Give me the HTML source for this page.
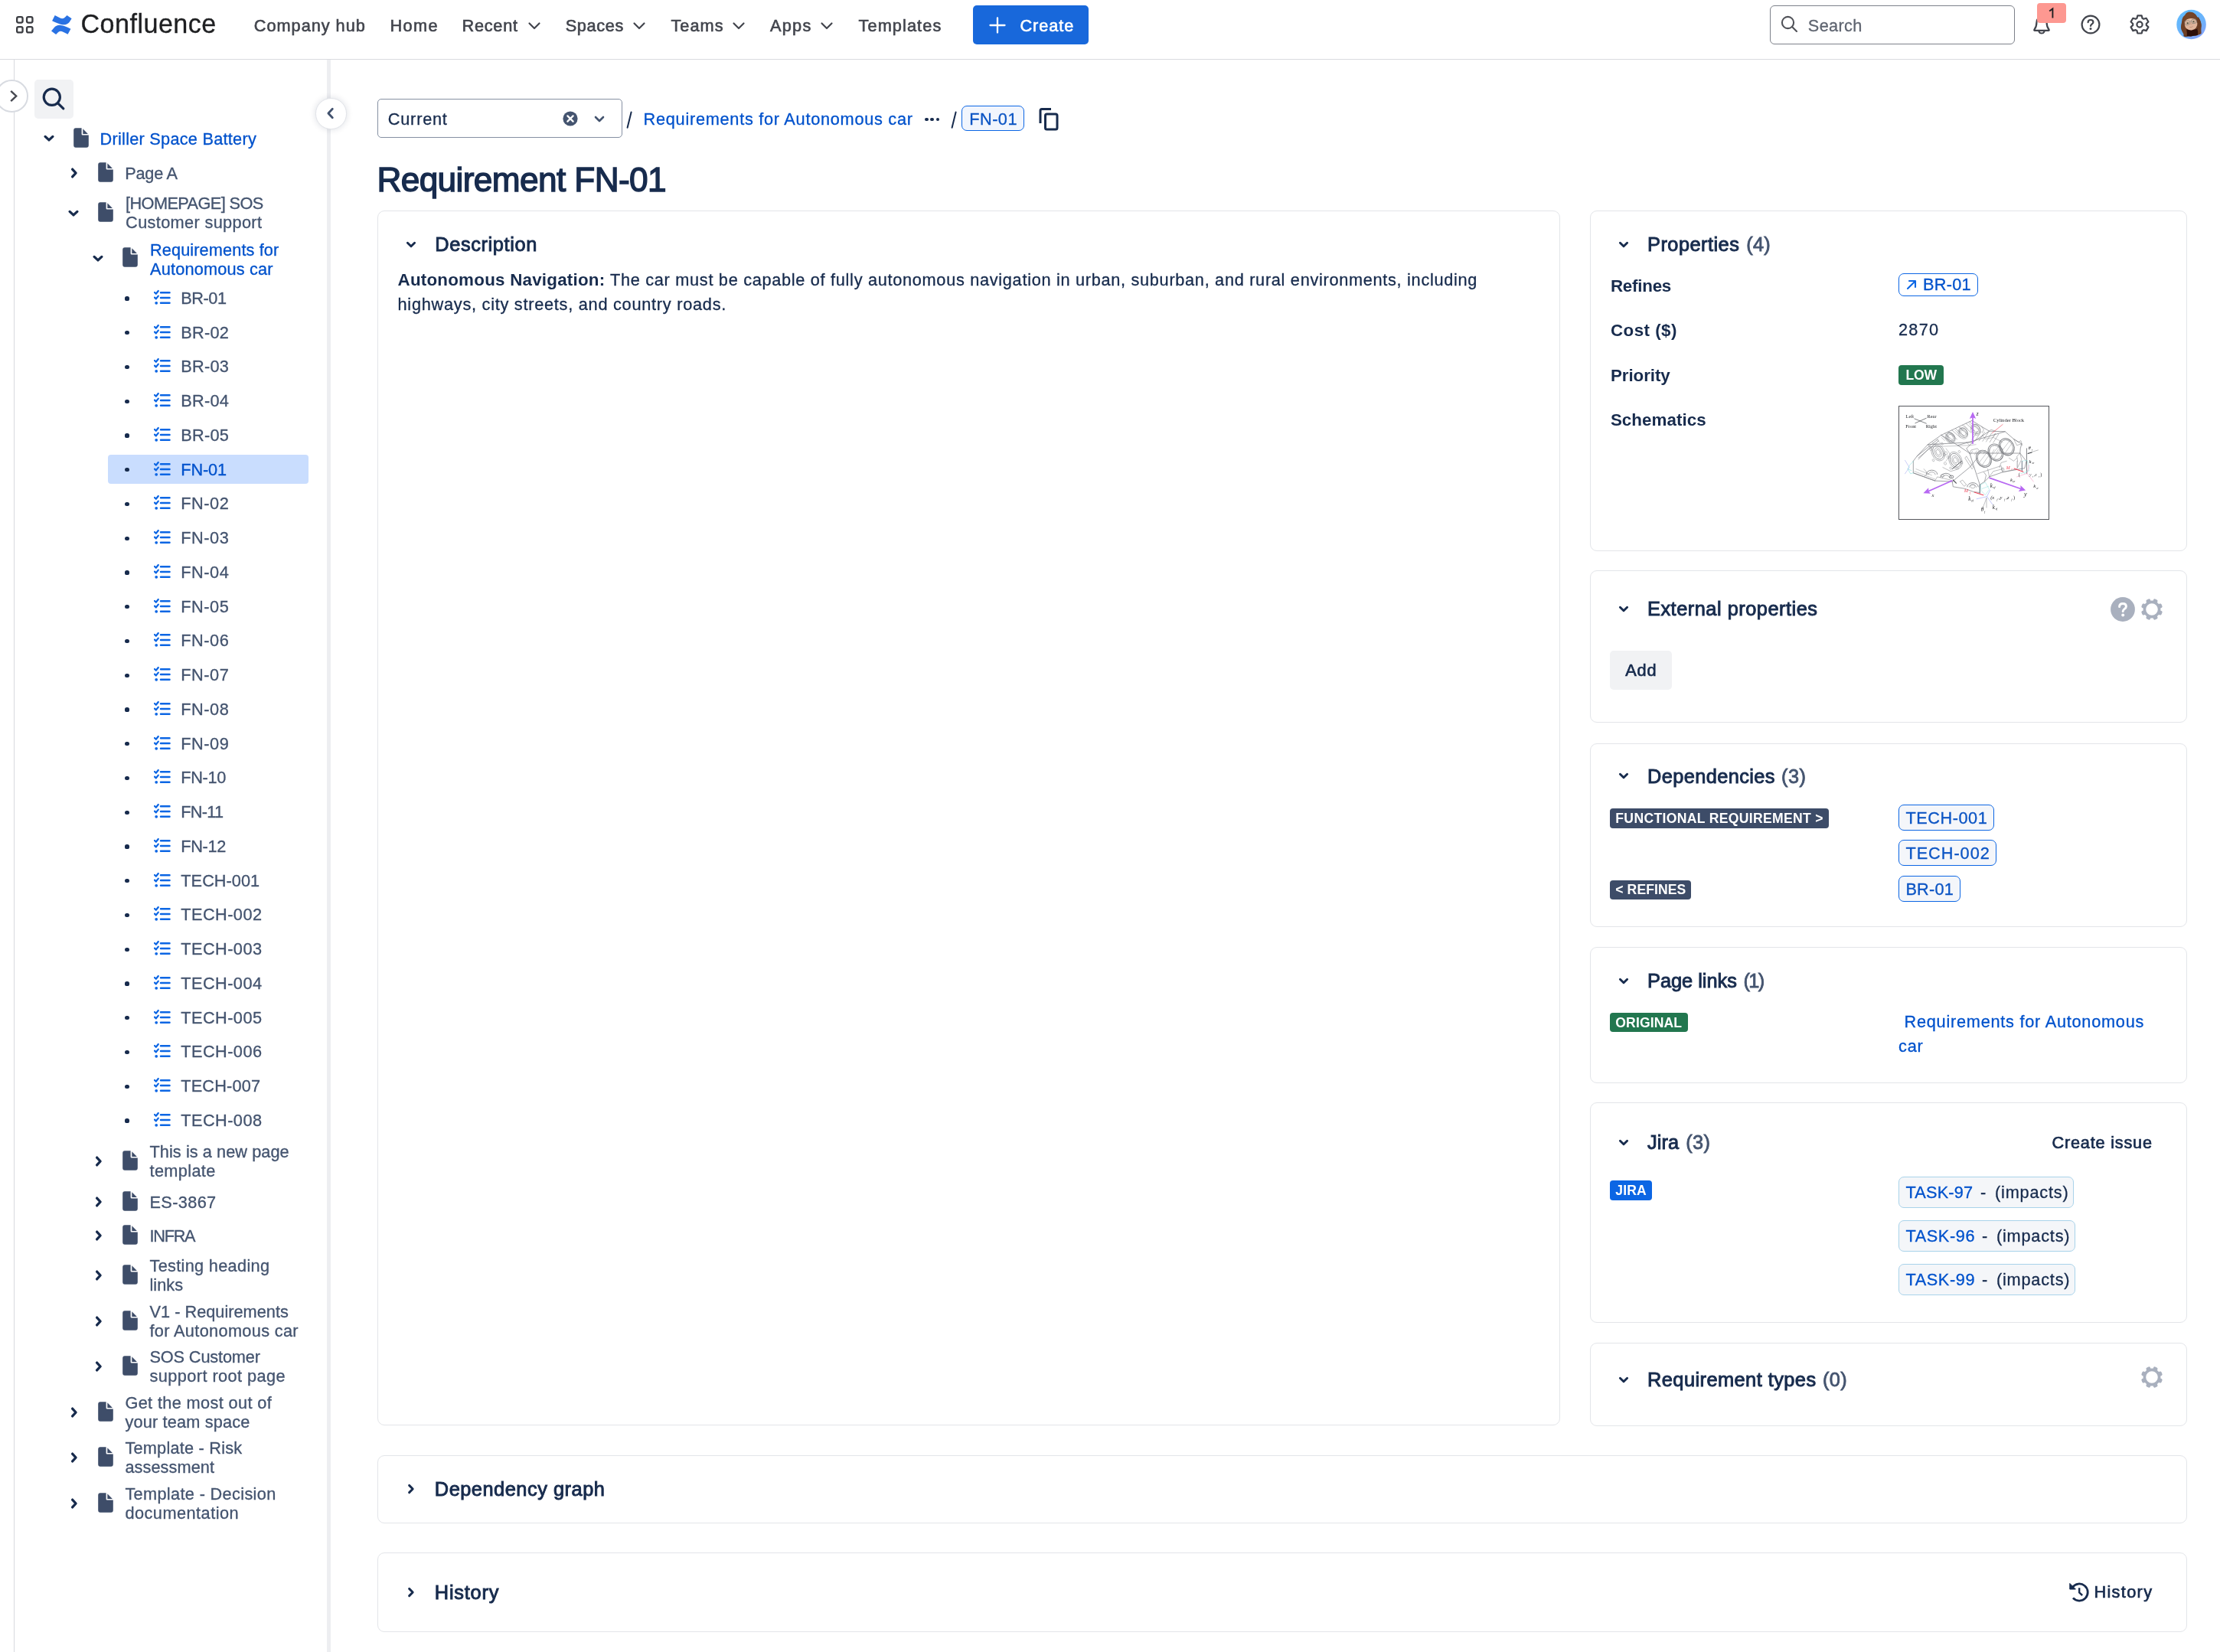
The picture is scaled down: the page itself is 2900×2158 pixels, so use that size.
<!DOCTYPE html>
<html><head><meta charset="utf-8"><title>Requirement FN-01</title><style>
html,body{margin:0;padding:0;background:#fff;}
body{width:2900px;height:2158px;position:relative;overflow:hidden;font-family:"Liberation Sans",sans-serif;}
body>div,body>svg,#tx>span{position:absolute;box-sizing:border-box;}
#tx{left:0;top:0;width:2900px;height:2158px;will-change:transform;}
span.t{white-space:pre;line-height:1;display:block;}
</style></head><body>
<div style="left:0px;top:76.6px;width:2900px;height:1.4px;background:#d9dbdf;"></div>
<svg style="left:18px;top:18px;" width="30" height="30" viewBox="18 18 30 30"><g fill="none" stroke="#3b3d42" stroke-width="2.3"><rect x="22.15" y="22.15" width="7.4" height="7.4" rx="2"/><rect x="35.05" y="22.15" width="7.4" height="7.4" rx="2"/><rect x="22.15" y="35.05" width="7.4" height="7.4" rx="2"/><rect x="35.05" y="35.05" width="7.4" height="7.4" rx="2"/></g></svg>
<svg style="left:60px;top:15px;" width="40" height="35" viewBox="60 15 40 35"><g fill="#2a72e3"><path d="M71.7 20.1 L78 23.3 Q82.5 25.4 85 22.6 L87.5 20 L93.6 24.3 L90.6 28.9 Q86.5 33.5 80 31.9 Q76 30.9 68.1 27.3 Z"/><path d="M88.6 44.7 L82.5 41.7 Q78 39.6 75.6 42.4 L73.1 44.9 L67 40.6 L70.4 36.6 Q74.4 31.6 81 33.3 Q85 34.2 92.4 37.7 Z"/></g></svg>
<svg style="left:688.6px;top:27.5px;" width="18" height="12" viewBox="0 0 18 12"><path d="M2.5 2.5 L9 9 L15.5 2.5" fill="none" stroke="#42454d" stroke-width="2.2" stroke-linecap="round" stroke-linejoin="round"/></svg>
<svg style="left:825.7px;top:27.5px;" width="18" height="12" viewBox="0 0 18 12"><path d="M2.5 2.5 L9 9 L15.5 2.5" fill="none" stroke="#42454d" stroke-width="2.2" stroke-linecap="round" stroke-linejoin="round"/></svg>
<svg style="left:956.4px;top:27.5px;" width="18" height="12" viewBox="0 0 18 12"><path d="M2.5 2.5 L9 9 L15.5 2.5" fill="none" stroke="#42454d" stroke-width="2.2" stroke-linecap="round" stroke-linejoin="round"/></svg>
<svg style="left:1071.3px;top:27.5px;" width="18" height="12" viewBox="0 0 18 12"><path d="M2.5 2.5 L9 9 L15.5 2.5" fill="none" stroke="#42454d" stroke-width="2.2" stroke-linecap="round" stroke-linejoin="round"/></svg>
<div style="left:1271px;top:7px;width:151px;height:51px;background:#1868db;border-radius:5px;"></div>
<svg style="left:1292px;top:21.5px;" width="22" height="22" viewBox="0 0 22 22"><path d="M11 1.5 V20.5 M1.5 11 H20.5" stroke="#fff" stroke-width="2.3" stroke-linecap="round"/></svg>
<div style="left:2312px;top:7px;width:320px;height:51px;border:1.5px solid #7d818a;border-radius:6px;background:#fff;"></div>
<svg style="left:2325px;top:18.6px;" width="24" height="24" viewBox="0 0 24 24"><circle cx="10.5" cy="10.5" r="7.6" fill="none" stroke="#505258" stroke-width="2.1"/><path d="M16 16 L22 22" stroke="#505258" stroke-width="2.1" stroke-linecap="round"/></svg>
<svg style="left:2652px;top:18.2px;" width="30" height="30" viewBox="0 0 30 30"><path d="M5.4 20.8 C8 17.6 8.4 15 8.4 11.6 C8.4 7.2 11 4.4 15 4.4 C19 4.4 21.6 7.2 21.6 11.6 C21.6 15 22 17.6 24.6 20.8 C25 21.4 24.7 21.9 24 21.9 H6 C5.3 21.9 5 21.4 5.4 20.8 Z" fill="none" stroke="#42454d" stroke-width="2.2" stroke-linejoin="round"/><path d="M11.6 23.4 C12.4 24.9 13.6 25.5 15 25.5 C16.4 25.5 17.6 24.9 18.4 23.4" fill="none" stroke="#42454d" stroke-width="2.2" stroke-linecap="round"/></svg>
<div style="left:2661px;top:4px;width:38px;height:25.7px;background:#fd9891;border-radius:4px;"></div>
<svg style="left:2672px;top:8px;" width="16" height="18" viewBox="0 0 16 18"><path d="M5.2 6.6 L9.4 3.4 V15.4" fill="none" stroke="#1e1f21" stroke-width="1.9" stroke-linejoin="miter"/></svg>
<svg style="left:2717px;top:18.200000000000003px;" width="28" height="28" viewBox="0 0 28 28"><circle cx="14" cy="14" r="11.4" fill="none" stroke="#42454d" stroke-width="2.2"/><path d="M10.6 11.2 C10.6 9.2 12 8 14 8 C16 8 17.4 9.2 17.4 11 C17.4 13.4 14 13.4 14 16" fill="none" stroke="#42454d" stroke-width="2.2" stroke-linecap="round"/><circle cx="14" cy="19.6" r="1.5" fill="#42454d"/></svg>
<svg style="left:2781px;top:18.299999999999997px;" width="28" height="28" viewBox="0 0 28 28"><path d="M11.3 2.2 h5.4 l0.9 3.5 l1.6 0.9 l3.5 -1 l2.7 4.7 l-2.6 2.5 v1.9 l2.6 2.5 l-2.7 4.7 l-3.5 -1 l-1.6 0.9 l-0.9 3.5 h-5.4 l-0.9 -3.5 l-1.6 -0.9 l-3.5 1 l-2.7 -4.7 l2.6 -2.5 v-1.9 l-2.6 -2.5 l2.7 -4.7 l3.5 1 l1.6 -0.9 Z" fill="none" stroke="#42454d" stroke-width="2.2" stroke-linejoin="round" transform="translate(0,0.2)"/><circle cx="14" cy="14" r="3.6" fill="none" stroke="#42454d" stroke-width="2.2"/></svg>
<svg style="left:2835px;top:5px;" width="55" height="55" viewBox="0 0 1652 1652"><defs><linearGradient id="avg" x1="0.2" y1="0" x2="0.85" y2="1"><stop offset="0" stop-color="#5dbbfe"/><stop offset="0.55" stop-color="#6db2fb"/><stop offset="1" stop-color="#8f9bf8"/></linearGradient>
<clipPath id="avc"><circle cx="828" cy="811" r="579"/></clipPath>
<radialGradient id="avh" cx="0.45" cy="0.3" r="0.8"><stop offset="0" stop-color="#7d4a2b"/><stop offset="1" stop-color="#5f3620"/></radialGradient></defs>
<g clip-path="url(#avc)"><rect x="200" y="200" width="1300" height="1300" fill="url(#avg)"/>
<path d="M760 318 C900 320 1010 400 1060 520 C1100 540 1140 520 1130 560 C1200 660 1235 800 1215 930 C1195 1040 1215 1100 1222 1160 C1180 1200 1120 1225 1075 1228 C1000 1260 930 1240 880 1262 C800 1290 700 1262 640 1288 C600 1300 560 1300 520 1252 C560 1180 470 1100 432 1000 C400 880 450 780 455 690 C455 560 520 480 575 440 C620 360 690 318 760 318 Z" fill="url(#avh)"/>
<path d="M640 990 C760 1040 960 1030 1090 960 L1080 1225 C1000 1258 930 1240 880 1262 C800 1290 720 1262 660 1275 Z" fill="#2d0f0a"/>
<ellipse cx="812" cy="790" rx="252" ry="246" fill="#e0b59b" transform="rotate(-8 812 790)"/>
<ellipse cx="790" cy="640" rx="150" ry="80" fill="#ecc7ad" opacity=".7"/>
<path d="M556 700 C560 560 640 470 790 470 C930 470 1040 540 1075 640 C1010 600 900 560 800 570 C690 580 600 620 556 700 Z" fill="#74452a"/>
<path d="M1050 640 C1120 760 1110 900 1060 1010 C1120 1120 1150 1180 1200 1160 C1230 1000 1190 960 1215 900 C1235 780 1180 640 1120 560 Z" fill="#6a3d23"/>
<path d="M455 700 C440 860 420 960 470 1080 C520 1180 560 1220 620 1270 C680 1180 640 1080 600 1000 C560 920 550 800 560 690 Z" fill="#6e4026"/>
<path d="M740 890 C790 915 860 905 905 858 C880 930 790 950 740 890 Z" fill="#b88670"/>
<path d="M800 730 C790 780 792 810 815 818 C840 822 858 808 850 790" fill="none" stroke="#c99a82" stroke-width="16" stroke-linecap="round"/>
<circle cx="682" cy="756" r="30" fill="#4a4a3a"/><circle cx="916" cy="700" r="30" fill="#4a4a3a"/>
<circle cx="682" cy="756" r="46" fill="none" stroke="#8a957a" stroke-width="14" opacity=".7"/><circle cx="916" cy="700" r="46" fill="none" stroke="#8a957a" stroke-width="14" opacity=".7"/>
<g fill="none" stroke="#7b7b78" stroke-width="22" opacity=".92"><rect x="562" y="655" width="200" height="165" rx="48" transform="rotate(-12 662 737)"/><rect x="838" y="602" width="190" height="160" rx="46" transform="rotate(-12 933 682)"/><path d="M760 700 L838 672"/></g>
</g></svg>
<div style="left:18px;top:78px;width:1px;height:2080px;background:#d8dade;"></div>
<div style="left:427.2px;top:78px;width:4.7px;height:2080px;background:#edeef1;"></div>
<div style="left:-5.8px;top:104.2px;width:42.6px;height:42.6px;border-radius:50%;background:#fff;border:2.2px solid #d8dbe1;"></div>
<svg style="left:10px;top:114px;" width="16" height="24" viewBox="0 0 16 24"><path d="M4.2 4.8 L11.2 11.5 L4.2 18.2" fill="none" stroke="#44474f" stroke-width="2.4" stroke-linecap="butt" stroke-linejoin="miter"/></svg>
<div style="left:45px;top:104px;width:51px;height:51px;background:#f1f2f4;border-radius:5px;"></div>
<svg style="left:50px;top:108px;" width="40" height="40" viewBox="0 0 40 40"><circle cx="17.8" cy="18.8" r="10.6" fill="none" stroke="#172b4d" stroke-width="3.2"/><path d="M25.4 26.6 L32.8 33.8" stroke="#172b4d" stroke-width="3.2" stroke-linecap="round"/></svg>
<div style="left:412.4px;top:128.2px;width:40.4px;height:40.4px;border-radius:50%;background:#fff;border:1.2px solid #e2e4e9;box-shadow:0 0 8px rgba(9,30,66,.14);"></div>
<svg style="left:424.6px;top:139.4px;" width="14" height="18" viewBox="0 0 14 18"><path d="M9.3 3.2 L3.9 9 L9.3 14.8" fill="none" stroke="#42526e" stroke-width="2.8" stroke-linecap="round" stroke-linejoin="round"/></svg>
<svg style="left:56px;top:175.2px;" width="16" height="12" viewBox="0 0 16 12"><path d="M3.1 3.4 L8 7.9 L12.9 3.4" fill="none" stroke="#172b4d" stroke-width="3.3" stroke-linecap="round" stroke-linejoin="round"/></svg>
<svg style="left:96.2px;top:166.6px;" width="20" height="26" viewBox="0 0 20 26"><path d="M3 0.3 H10.6 V8.2 Q10.6 9.6 12 9.6 H19.8 V22.8 Q19.8 25.7 17 25.7 H3 Q0.2 25.7 0.2 22.8 V3.2 Q0.2 0.3 3 0.3 Z" fill="#3e4d69"/><path d="M12.3 1.2 L18.9 7.9 H12.3 Z" fill="#3e4d69"/></svg>
<svg style="left:91px;top:218px;" width="12" height="16" viewBox="0 0 12 16"><path d="M3.6 3.1 L8.1 8 L3.6 12.9" fill="none" stroke="#172b4d" stroke-width="3.3" stroke-linecap="round" stroke-linejoin="round"/></svg>
<svg style="left:128px;top:211.8px;" width="20" height="26" viewBox="0 0 20 26"><path d="M3 0.3 H10.6 V8.2 Q10.6 9.6 12 9.6 H19.8 V22.8 Q19.8 25.7 17 25.7 H3 Q0.2 25.7 0.2 22.8 V3.2 Q0.2 0.3 3 0.3 Z" fill="#3e4d69"/><path d="M12.3 1.2 L18.9 7.9 H12.3 Z" fill="#3e4d69"/></svg>
<svg style="left:88px;top:272.8px;" width="16" height="12" viewBox="0 0 16 12"><path d="M3.1 3.4 L8 7.9 L12.9 3.4" fill="none" stroke="#172b4d" stroke-width="3.3" stroke-linecap="round" stroke-linejoin="round"/></svg>
<svg style="left:128px;top:264px;" width="20" height="26" viewBox="0 0 20 26"><path d="M3 0.3 H10.6 V8.2 Q10.6 9.6 12 9.6 H19.8 V22.8 Q19.8 25.7 17 25.7 H3 Q0.2 25.7 0.2 22.8 V3.2 Q0.2 0.3 3 0.3 Z" fill="#3e4d69"/><path d="M12.3 1.2 L18.9 7.9 H12.3 Z" fill="#3e4d69"/></svg>
<svg style="left:120.4px;top:332px;" width="16" height="12" viewBox="0 0 16 12"><path d="M3.1 3.4 L8 7.9 L12.9 3.4" fill="none" stroke="#172b4d" stroke-width="3.3" stroke-linecap="round" stroke-linejoin="round"/></svg>
<svg style="left:160.2px;top:323px;" width="20" height="26" viewBox="0 0 20 26"><path d="M3 0.3 H10.6 V8.2 Q10.6 9.6 12 9.6 H19.8 V22.8 Q19.8 25.7 17 25.7 H3 Q0.2 25.7 0.2 22.8 V3.2 Q0.2 0.3 3 0.3 Z" fill="#3e4d69"/><path d="M12.3 1.2 L18.9 7.9 H12.3 Z" fill="#3e4d69"/></svg>
<div style="left:163.4px;top:387.4px;width:5.2px;height:5.2px;border-radius:50%;background:#172b4d;"></div>
<svg style="left:200.5px;top:377.9px;" width="22" height="22" viewBox="0 0 22 22"><g fill="none" stroke="#0c66e4" stroke-width="2.2" stroke-linecap="round" stroke-linejoin="round"><path d="M9 4.2 H20.5 M9 11 H20.5 M9 17.8 H20.5" stroke-width="2.5"/><path d="M1 4 L2.8 5.8 L5.8 2"/><path d="M1 10.6 L2.8 12.4 L5.8 8.6"/></g><circle cx="3.2" cy="17.8" r="1.9" fill="#0c66e4"/></svg>
<div style="left:163.4px;top:432.15px;width:5.2px;height:5.2px;border-radius:50%;background:#172b4d;"></div>
<svg style="left:200.5px;top:422.65px;" width="22" height="22" viewBox="0 0 22 22"><g fill="none" stroke="#0c66e4" stroke-width="2.2" stroke-linecap="round" stroke-linejoin="round"><path d="M9 4.2 H20.5 M9 11 H20.5 M9 17.8 H20.5" stroke-width="2.5"/><path d="M1 4 L2.8 5.8 L5.8 2"/><path d="M1 10.6 L2.8 12.4 L5.8 8.6"/></g><circle cx="3.2" cy="17.8" r="1.9" fill="#0c66e4"/></svg>
<div style="left:163.4px;top:476.9px;width:5.2px;height:5.2px;border-radius:50%;background:#172b4d;"></div>
<svg style="left:200.5px;top:467.4px;" width="22" height="22" viewBox="0 0 22 22"><g fill="none" stroke="#0c66e4" stroke-width="2.2" stroke-linecap="round" stroke-linejoin="round"><path d="M9 4.2 H20.5 M9 11 H20.5 M9 17.8 H20.5" stroke-width="2.5"/><path d="M1 4 L2.8 5.8 L5.8 2"/><path d="M1 10.6 L2.8 12.4 L5.8 8.6"/></g><circle cx="3.2" cy="17.8" r="1.9" fill="#0c66e4"/></svg>
<div style="left:163.4px;top:521.65px;width:5.2px;height:5.2px;border-radius:50%;background:#172b4d;"></div>
<svg style="left:200.5px;top:512.15px;" width="22" height="22" viewBox="0 0 22 22"><g fill="none" stroke="#0c66e4" stroke-width="2.2" stroke-linecap="round" stroke-linejoin="round"><path d="M9 4.2 H20.5 M9 11 H20.5 M9 17.8 H20.5" stroke-width="2.5"/><path d="M1 4 L2.8 5.8 L5.8 2"/><path d="M1 10.6 L2.8 12.4 L5.8 8.6"/></g><circle cx="3.2" cy="17.8" r="1.9" fill="#0c66e4"/></svg>
<div style="left:163.4px;top:566.4px;width:5.2px;height:5.2px;border-radius:50%;background:#172b4d;"></div>
<svg style="left:200.5px;top:556.9px;" width="22" height="22" viewBox="0 0 22 22"><g fill="none" stroke="#0c66e4" stroke-width="2.2" stroke-linecap="round" stroke-linejoin="round"><path d="M9 4.2 H20.5 M9 11 H20.5 M9 17.8 H20.5" stroke-width="2.5"/><path d="M1 4 L2.8 5.8 L5.8 2"/><path d="M1 10.6 L2.8 12.4 L5.8 8.6"/></g><circle cx="3.2" cy="17.8" r="1.9" fill="#0c66e4"/></svg>
<div style="left:141px;top:593.85px;width:262px;height:37.8px;background:#c9ddfe;border-radius:4px;"></div>
<div style="left:163.4px;top:611.15px;width:5.2px;height:5.2px;border-radius:50%;background:#172b4d;"></div>
<svg style="left:200.5px;top:601.65px;" width="22" height="22" viewBox="0 0 22 22"><g fill="none" stroke="#0c66e4" stroke-width="2.2" stroke-linecap="round" stroke-linejoin="round"><path d="M9 4.2 H20.5 M9 11 H20.5 M9 17.8 H20.5" stroke-width="2.5"/><path d="M1 4 L2.8 5.8 L5.8 2"/><path d="M1 10.6 L2.8 12.4 L5.8 8.6"/></g><circle cx="3.2" cy="17.8" r="1.9" fill="#0c66e4"/></svg>
<div style="left:163.4px;top:655.9px;width:5.2px;height:5.2px;border-radius:50%;background:#172b4d;"></div>
<svg style="left:200.5px;top:646.4px;" width="22" height="22" viewBox="0 0 22 22"><g fill="none" stroke="#0c66e4" stroke-width="2.2" stroke-linecap="round" stroke-linejoin="round"><path d="M9 4.2 H20.5 M9 11 H20.5 M9 17.8 H20.5" stroke-width="2.5"/><path d="M1 4 L2.8 5.8 L5.8 2"/><path d="M1 10.6 L2.8 12.4 L5.8 8.6"/></g><circle cx="3.2" cy="17.8" r="1.9" fill="#0c66e4"/></svg>
<div style="left:163.4px;top:700.65px;width:5.2px;height:5.2px;border-radius:50%;background:#172b4d;"></div>
<svg style="left:200.5px;top:691.15px;" width="22" height="22" viewBox="0 0 22 22"><g fill="none" stroke="#0c66e4" stroke-width="2.2" stroke-linecap="round" stroke-linejoin="round"><path d="M9 4.2 H20.5 M9 11 H20.5 M9 17.8 H20.5" stroke-width="2.5"/><path d="M1 4 L2.8 5.8 L5.8 2"/><path d="M1 10.6 L2.8 12.4 L5.8 8.6"/></g><circle cx="3.2" cy="17.8" r="1.9" fill="#0c66e4"/></svg>
<div style="left:163.4px;top:745.4px;width:5.2px;height:5.2px;border-radius:50%;background:#172b4d;"></div>
<svg style="left:200.5px;top:735.9px;" width="22" height="22" viewBox="0 0 22 22"><g fill="none" stroke="#0c66e4" stroke-width="2.2" stroke-linecap="round" stroke-linejoin="round"><path d="M9 4.2 H20.5 M9 11 H20.5 M9 17.8 H20.5" stroke-width="2.5"/><path d="M1 4 L2.8 5.8 L5.8 2"/><path d="M1 10.6 L2.8 12.4 L5.8 8.6"/></g><circle cx="3.2" cy="17.8" r="1.9" fill="#0c66e4"/></svg>
<div style="left:163.4px;top:790.15px;width:5.2px;height:5.2px;border-radius:50%;background:#172b4d;"></div>
<svg style="left:200.5px;top:780.65px;" width="22" height="22" viewBox="0 0 22 22"><g fill="none" stroke="#0c66e4" stroke-width="2.2" stroke-linecap="round" stroke-linejoin="round"><path d="M9 4.2 H20.5 M9 11 H20.5 M9 17.8 H20.5" stroke-width="2.5"/><path d="M1 4 L2.8 5.8 L5.8 2"/><path d="M1 10.6 L2.8 12.4 L5.8 8.6"/></g><circle cx="3.2" cy="17.8" r="1.9" fill="#0c66e4"/></svg>
<div style="left:163.4px;top:834.9px;width:5.2px;height:5.2px;border-radius:50%;background:#172b4d;"></div>
<svg style="left:200.5px;top:825.4px;" width="22" height="22" viewBox="0 0 22 22"><g fill="none" stroke="#0c66e4" stroke-width="2.2" stroke-linecap="round" stroke-linejoin="round"><path d="M9 4.2 H20.5 M9 11 H20.5 M9 17.8 H20.5" stroke-width="2.5"/><path d="M1 4 L2.8 5.8 L5.8 2"/><path d="M1 10.6 L2.8 12.4 L5.8 8.6"/></g><circle cx="3.2" cy="17.8" r="1.9" fill="#0c66e4"/></svg>
<div style="left:163.4px;top:879.65px;width:5.2px;height:5.2px;border-radius:50%;background:#172b4d;"></div>
<svg style="left:200.5px;top:870.15px;" width="22" height="22" viewBox="0 0 22 22"><g fill="none" stroke="#0c66e4" stroke-width="2.2" stroke-linecap="round" stroke-linejoin="round"><path d="M9 4.2 H20.5 M9 11 H20.5 M9 17.8 H20.5" stroke-width="2.5"/><path d="M1 4 L2.8 5.8 L5.8 2"/><path d="M1 10.6 L2.8 12.4 L5.8 8.6"/></g><circle cx="3.2" cy="17.8" r="1.9" fill="#0c66e4"/></svg>
<div style="left:163.4px;top:924.4px;width:5.2px;height:5.2px;border-radius:50%;background:#172b4d;"></div>
<svg style="left:200.5px;top:914.9px;" width="22" height="22" viewBox="0 0 22 22"><g fill="none" stroke="#0c66e4" stroke-width="2.2" stroke-linecap="round" stroke-linejoin="round"><path d="M9 4.2 H20.5 M9 11 H20.5 M9 17.8 H20.5" stroke-width="2.5"/><path d="M1 4 L2.8 5.8 L5.8 2"/><path d="M1 10.6 L2.8 12.4 L5.8 8.6"/></g><circle cx="3.2" cy="17.8" r="1.9" fill="#0c66e4"/></svg>
<div style="left:163.4px;top:969.15px;width:5.2px;height:5.2px;border-radius:50%;background:#172b4d;"></div>
<svg style="left:200.5px;top:959.65px;" width="22" height="22" viewBox="0 0 22 22"><g fill="none" stroke="#0c66e4" stroke-width="2.2" stroke-linecap="round" stroke-linejoin="round"><path d="M9 4.2 H20.5 M9 11 H20.5 M9 17.8 H20.5" stroke-width="2.5"/><path d="M1 4 L2.8 5.8 L5.8 2"/><path d="M1 10.6 L2.8 12.4 L5.8 8.6"/></g><circle cx="3.2" cy="17.8" r="1.9" fill="#0c66e4"/></svg>
<div style="left:163.4px;top:1013.9px;width:5.2px;height:5.2px;border-radius:50%;background:#172b4d;"></div>
<svg style="left:200.5px;top:1004.4px;" width="22" height="22" viewBox="0 0 22 22"><g fill="none" stroke="#0c66e4" stroke-width="2.2" stroke-linecap="round" stroke-linejoin="round"><path d="M9 4.2 H20.5 M9 11 H20.5 M9 17.8 H20.5" stroke-width="2.5"/><path d="M1 4 L2.8 5.8 L5.8 2"/><path d="M1 10.6 L2.8 12.4 L5.8 8.6"/></g><circle cx="3.2" cy="17.8" r="1.9" fill="#0c66e4"/></svg>
<div style="left:163.4px;top:1058.65px;width:5.2px;height:5.2px;border-radius:50%;background:#172b4d;"></div>
<svg style="left:200.5px;top:1049.15px;" width="22" height="22" viewBox="0 0 22 22"><g fill="none" stroke="#0c66e4" stroke-width="2.2" stroke-linecap="round" stroke-linejoin="round"><path d="M9 4.2 H20.5 M9 11 H20.5 M9 17.8 H20.5" stroke-width="2.5"/><path d="M1 4 L2.8 5.8 L5.8 2"/><path d="M1 10.6 L2.8 12.4 L5.8 8.6"/></g><circle cx="3.2" cy="17.8" r="1.9" fill="#0c66e4"/></svg>
<div style="left:163.4px;top:1103.4px;width:5.2px;height:5.2px;border-radius:50%;background:#172b4d;"></div>
<svg style="left:200.5px;top:1093.9px;" width="22" height="22" viewBox="0 0 22 22"><g fill="none" stroke="#0c66e4" stroke-width="2.2" stroke-linecap="round" stroke-linejoin="round"><path d="M9 4.2 H20.5 M9 11 H20.5 M9 17.8 H20.5" stroke-width="2.5"/><path d="M1 4 L2.8 5.8 L5.8 2"/><path d="M1 10.6 L2.8 12.4 L5.8 8.6"/></g><circle cx="3.2" cy="17.8" r="1.9" fill="#0c66e4"/></svg>
<div style="left:163.4px;top:1148.15px;width:5.2px;height:5.2px;border-radius:50%;background:#172b4d;"></div>
<svg style="left:200.5px;top:1138.65px;" width="22" height="22" viewBox="0 0 22 22"><g fill="none" stroke="#0c66e4" stroke-width="2.2" stroke-linecap="round" stroke-linejoin="round"><path d="M9 4.2 H20.5 M9 11 H20.5 M9 17.8 H20.5" stroke-width="2.5"/><path d="M1 4 L2.8 5.8 L5.8 2"/><path d="M1 10.6 L2.8 12.4 L5.8 8.6"/></g><circle cx="3.2" cy="17.8" r="1.9" fill="#0c66e4"/></svg>
<div style="left:163.4px;top:1192.9px;width:5.2px;height:5.2px;border-radius:50%;background:#172b4d;"></div>
<svg style="left:200.5px;top:1183.4px;" width="22" height="22" viewBox="0 0 22 22"><g fill="none" stroke="#0c66e4" stroke-width="2.2" stroke-linecap="round" stroke-linejoin="round"><path d="M9 4.2 H20.5 M9 11 H20.5 M9 17.8 H20.5" stroke-width="2.5"/><path d="M1 4 L2.8 5.8 L5.8 2"/><path d="M1 10.6 L2.8 12.4 L5.8 8.6"/></g><circle cx="3.2" cy="17.8" r="1.9" fill="#0c66e4"/></svg>
<div style="left:163.4px;top:1237.65px;width:5.2px;height:5.2px;border-radius:50%;background:#172b4d;"></div>
<svg style="left:200.5px;top:1228.15px;" width="22" height="22" viewBox="0 0 22 22"><g fill="none" stroke="#0c66e4" stroke-width="2.2" stroke-linecap="round" stroke-linejoin="round"><path d="M9 4.2 H20.5 M9 11 H20.5 M9 17.8 H20.5" stroke-width="2.5"/><path d="M1 4 L2.8 5.8 L5.8 2"/><path d="M1 10.6 L2.8 12.4 L5.8 8.6"/></g><circle cx="3.2" cy="17.8" r="1.9" fill="#0c66e4"/></svg>
<div style="left:163.4px;top:1282.4px;width:5.2px;height:5.2px;border-radius:50%;background:#172b4d;"></div>
<svg style="left:200.5px;top:1272.9px;" width="22" height="22" viewBox="0 0 22 22"><g fill="none" stroke="#0c66e4" stroke-width="2.2" stroke-linecap="round" stroke-linejoin="round"><path d="M9 4.2 H20.5 M9 11 H20.5 M9 17.8 H20.5" stroke-width="2.5"/><path d="M1 4 L2.8 5.8 L5.8 2"/><path d="M1 10.6 L2.8 12.4 L5.8 8.6"/></g><circle cx="3.2" cy="17.8" r="1.9" fill="#0c66e4"/></svg>
<div style="left:163.4px;top:1327.15px;width:5.2px;height:5.2px;border-radius:50%;background:#172b4d;"></div>
<svg style="left:200.5px;top:1317.65px;" width="22" height="22" viewBox="0 0 22 22"><g fill="none" stroke="#0c66e4" stroke-width="2.2" stroke-linecap="round" stroke-linejoin="round"><path d="M9 4.2 H20.5 M9 11 H20.5 M9 17.8 H20.5" stroke-width="2.5"/><path d="M1 4 L2.8 5.8 L5.8 2"/><path d="M1 10.6 L2.8 12.4 L5.8 8.6"/></g><circle cx="3.2" cy="17.8" r="1.9" fill="#0c66e4"/></svg>
<div style="left:163.4px;top:1371.9px;width:5.2px;height:5.2px;border-radius:50%;background:#172b4d;"></div>
<svg style="left:200.5px;top:1362.4px;" width="22" height="22" viewBox="0 0 22 22"><g fill="none" stroke="#0c66e4" stroke-width="2.2" stroke-linecap="round" stroke-linejoin="round"><path d="M9 4.2 H20.5 M9 11 H20.5 M9 17.8 H20.5" stroke-width="2.5"/><path d="M1 4 L2.8 5.8 L5.8 2"/><path d="M1 10.6 L2.8 12.4 L5.8 8.6"/></g><circle cx="3.2" cy="17.8" r="1.9" fill="#0c66e4"/></svg>
<div style="left:163.4px;top:1416.65px;width:5.2px;height:5.2px;border-radius:50%;background:#172b4d;"></div>
<svg style="left:200.5px;top:1407.15px;" width="22" height="22" viewBox="0 0 22 22"><g fill="none" stroke="#0c66e4" stroke-width="2.2" stroke-linecap="round" stroke-linejoin="round"><path d="M9 4.2 H20.5 M9 11 H20.5 M9 17.8 H20.5" stroke-width="2.5"/><path d="M1 4 L2.8 5.8 L5.8 2"/><path d="M1 10.6 L2.8 12.4 L5.8 8.6"/></g><circle cx="3.2" cy="17.8" r="1.9" fill="#0c66e4"/></svg>
<div style="left:163.4px;top:1461.4px;width:5.2px;height:5.2px;border-radius:50%;background:#172b4d;"></div>
<svg style="left:200.5px;top:1451.9px;" width="22" height="22" viewBox="0 0 22 22"><g fill="none" stroke="#0c66e4" stroke-width="2.2" stroke-linecap="round" stroke-linejoin="round"><path d="M9 4.2 H20.5 M9 11 H20.5 M9 17.8 H20.5" stroke-width="2.5"/><path d="M1 4 L2.8 5.8 L5.8 2"/><path d="M1 10.6 L2.8 12.4 L5.8 8.6"/></g><circle cx="3.2" cy="17.8" r="1.9" fill="#0c66e4"/></svg>
<svg style="left:123px;top:1509px;" width="12" height="16" viewBox="0 0 12 16"><path d="M3.6 3.1 L8.1 8 L3.6 12.9" fill="none" stroke="#172b4d" stroke-width="3.3" stroke-linecap="round" stroke-linejoin="round"/></svg>
<svg style="left:160px;top:1503px;" width="20" height="26" viewBox="0 0 20 26"><path d="M3 0.3 H10.6 V8.2 Q10.6 9.6 12 9.6 H19.8 V22.8 Q19.8 25.7 17 25.7 H3 Q0.2 25.7 0.2 22.8 V3.2 Q0.2 0.3 3 0.3 Z" fill="#3e4d69"/><path d="M12.3 1.2 L18.9 7.9 H12.3 Z" fill="#3e4d69"/></svg>
<svg style="left:123px;top:1561.6px;" width="12" height="16" viewBox="0 0 12 16"><path d="M3.6 3.1 L8.1 8 L3.6 12.9" fill="none" stroke="#172b4d" stroke-width="3.3" stroke-linecap="round" stroke-linejoin="round"/></svg>
<svg style="left:160px;top:1555.6px;" width="20" height="26" viewBox="0 0 20 26"><path d="M3 0.3 H10.6 V8.2 Q10.6 9.6 12 9.6 H19.8 V22.8 Q19.8 25.7 17 25.7 H3 Q0.2 25.7 0.2 22.8 V3.2 Q0.2 0.3 3 0.3 Z" fill="#3e4d69"/><path d="M12.3 1.2 L18.9 7.9 H12.3 Z" fill="#3e4d69"/></svg>
<svg style="left:123px;top:1605.8px;" width="12" height="16" viewBox="0 0 12 16"><path d="M3.6 3.1 L8.1 8 L3.6 12.9" fill="none" stroke="#172b4d" stroke-width="3.3" stroke-linecap="round" stroke-linejoin="round"/></svg>
<svg style="left:160px;top:1599.8px;" width="20" height="26" viewBox="0 0 20 26"><path d="M3 0.3 H10.6 V8.2 Q10.6 9.6 12 9.6 H19.8 V22.8 Q19.8 25.7 17 25.7 H3 Q0.2 25.7 0.2 22.8 V3.2 Q0.2 0.3 3 0.3 Z" fill="#3e4d69"/><path d="M12.3 1.2 L18.9 7.9 H12.3 Z" fill="#3e4d69"/></svg>
<svg style="left:123px;top:1658px;" width="12" height="16" viewBox="0 0 12 16"><path d="M3.6 3.1 L8.1 8 L3.6 12.9" fill="none" stroke="#172b4d" stroke-width="3.3" stroke-linecap="round" stroke-linejoin="round"/></svg>
<svg style="left:160px;top:1652px;" width="20" height="26" viewBox="0 0 20 26"><path d="M3 0.3 H10.6 V8.2 Q10.6 9.6 12 9.6 H19.8 V22.8 Q19.8 25.7 17 25.7 H3 Q0.2 25.7 0.2 22.8 V3.2 Q0.2 0.3 3 0.3 Z" fill="#3e4d69"/><path d="M12.3 1.2 L18.9 7.9 H12.3 Z" fill="#3e4d69"/></svg>
<svg style="left:123px;top:1718px;" width="12" height="16" viewBox="0 0 12 16"><path d="M3.6 3.1 L8.1 8 L3.6 12.9" fill="none" stroke="#172b4d" stroke-width="3.3" stroke-linecap="round" stroke-linejoin="round"/></svg>
<svg style="left:160px;top:1712px;" width="20" height="26" viewBox="0 0 20 26"><path d="M3 0.3 H10.6 V8.2 Q10.6 9.6 12 9.6 H19.8 V22.8 Q19.8 25.7 17 25.7 H3 Q0.2 25.7 0.2 22.8 V3.2 Q0.2 0.3 3 0.3 Z" fill="#3e4d69"/><path d="M12.3 1.2 L18.9 7.9 H12.3 Z" fill="#3e4d69"/></svg>
<svg style="left:123px;top:1777px;" width="12" height="16" viewBox="0 0 12 16"><path d="M3.6 3.1 L8.1 8 L3.6 12.9" fill="none" stroke="#172b4d" stroke-width="3.3" stroke-linecap="round" stroke-linejoin="round"/></svg>
<svg style="left:160px;top:1771px;" width="20" height="26" viewBox="0 0 20 26"><path d="M3 0.3 H10.6 V8.2 Q10.6 9.6 12 9.6 H19.8 V22.8 Q19.8 25.7 17 25.7 H3 Q0.2 25.7 0.2 22.8 V3.2 Q0.2 0.3 3 0.3 Z" fill="#3e4d69"/><path d="M12.3 1.2 L18.9 7.9 H12.3 Z" fill="#3e4d69"/></svg>
<svg style="left:91px;top:1837px;" width="12" height="16" viewBox="0 0 12 16"><path d="M3.6 3.1 L8.1 8 L3.6 12.9" fill="none" stroke="#172b4d" stroke-width="3.3" stroke-linecap="round" stroke-linejoin="round"/></svg>
<svg style="left:127.6px;top:1831px;" width="20" height="26" viewBox="0 0 20 26"><path d="M3 0.3 H10.6 V8.2 Q10.6 9.6 12 9.6 H19.8 V22.8 Q19.8 25.7 17 25.7 H3 Q0.2 25.7 0.2 22.8 V3.2 Q0.2 0.3 3 0.3 Z" fill="#3e4d69"/><path d="M12.3 1.2 L18.9 7.9 H12.3 Z" fill="#3e4d69"/></svg>
<svg style="left:91px;top:1896px;" width="12" height="16" viewBox="0 0 12 16"><path d="M3.6 3.1 L8.1 8 L3.6 12.9" fill="none" stroke="#172b4d" stroke-width="3.3" stroke-linecap="round" stroke-linejoin="round"/></svg>
<svg style="left:127.6px;top:1890px;" width="20" height="26" viewBox="0 0 20 26"><path d="M3 0.3 H10.6 V8.2 Q10.6 9.6 12 9.6 H19.8 V22.8 Q19.8 25.7 17 25.7 H3 Q0.2 25.7 0.2 22.8 V3.2 Q0.2 0.3 3 0.3 Z" fill="#3e4d69"/><path d="M12.3 1.2 L18.9 7.9 H12.3 Z" fill="#3e4d69"/></svg>
<svg style="left:91px;top:1956px;" width="12" height="16" viewBox="0 0 12 16"><path d="M3.6 3.1 L8.1 8 L3.6 12.9" fill="none" stroke="#172b4d" stroke-width="3.3" stroke-linecap="round" stroke-linejoin="round"/></svg>
<svg style="left:127.6px;top:1950px;" width="20" height="26" viewBox="0 0 20 26"><path d="M3 0.3 H10.6 V8.2 Q10.6 9.6 12 9.6 H19.8 V22.8 Q19.8 25.7 17 25.7 H3 Q0.2 25.7 0.2 22.8 V3.2 Q0.2 0.3 3 0.3 Z" fill="#3e4d69"/><path d="M12.3 1.2 L18.9 7.9 H12.3 Z" fill="#3e4d69"/></svg>
<div style="left:493px;top:129px;width:320px;height:51px;border:1.5px solid #8590a2;border-radius:5px;background:#fff;"></div>
<svg style="left:733.7px;top:144px;" width="22" height="22" viewBox="0 0 22 22"><circle cx="11" cy="11" r="9.6" fill="#44546f"/><path d="M7.4 7.4 L14.6 14.6 M14.6 7.4 L7.4 14.6" stroke="#fff" stroke-width="2.3" stroke-linecap="round"/></svg>
<svg style="left:775px;top:150px;" width="16" height="12" viewBox="0 0 16 12"><path d="M3 3 L8 8 L13 3" fill="none" stroke="#44546f" stroke-width="2.6" stroke-linecap="round" stroke-linejoin="round"/></svg>
<svg style="left:815px;top:143px;" width="16" height="28" viewBox="0 0 16 28"><path d="M9.6 3.4 L4.6 23.8" stroke="#172b4d" stroke-width="2" stroke-linecap="round"/></svg>
<div style="left:1208.1999999999998px;top:153.6px;width:4.8px;height:4.8px;border-radius:50%;background:#172b4d;"></div>
<div style="left:1215.3999999999999px;top:153.6px;width:4.8px;height:4.8px;border-radius:50%;background:#172b4d;"></div>
<div style="left:1222.6px;top:153.6px;width:4.8px;height:4.8px;border-radius:50%;background:#172b4d;"></div>
<svg style="left:1239px;top:143px;" width="16" height="28" viewBox="0 0 16 28"><path d="M9.6 3.4 L4.6 23.8" stroke="#172b4d" stroke-width="2" stroke-linecap="round"/></svg>
<div style="left:1255.8px;top:138.3px;width:82px;height:33px;border:1.5px solid #0c66e4;border-radius:7px;background:#f1f5fd;"></div>
<svg style="left:1356px;top:139.5px;" width="28" height="31" viewBox="0 0 28 31"><g fill="none" stroke="#172b4d" stroke-width="3" stroke-linejoin="round"><path d="M3 21 V4.5 Q3 2.5 5 2.5 H17"/><rect x="9.5" y="9" width="15.5" height="20" rx="2"/></g></svg>
<div style="left:493px;top:275px;width:1544.5px;height:1587px;border:1.5px solid #e3e5e9;border-radius:9px;background:#fff;"></div>
<svg style="left:529.6px;top:314.6px;" width="14" height="10" viewBox="0 0 14 10"><path d="M2.4 2.2 L7 6.8 L11.6 2.2" fill="none" stroke="#172b4d" stroke-width="2.9" stroke-linecap="round" stroke-linejoin="round"/></svg>
<div style="left:2077px;top:275px;width:780px;height:445px;border:1.5px solid #e3e5e9;border-radius:9px;background:#fff;"></div>
<svg style="left:2113.5px;top:314.6px;" width="14" height="10" viewBox="0 0 14 10"><path d="M2.4 2.2 L7 6.8 L11.6 2.2" fill="none" stroke="#172b4d" stroke-width="2.9" stroke-linecap="round" stroke-linejoin="round"/></svg>
<div style="left:2480px;top:356.5px;width:104px;height:30.5px;border:1.5px solid #0c66e4;border-radius:7px;background:#fff;"></div>
<svg style="left:2489px;top:363.5px;" width="16" height="16" viewBox="0 0 16 16"><path d="M3 13 L12.6 3.4 M5 3 H13 V11" fill="none" stroke="#0c66e4" stroke-width="2.1" stroke-linecap="round" stroke-linejoin="round"/></svg>
<div style="left:2480px;top:477px;width:59px;height:25.6px;background:#22774f;border-radius:4px;"></div>
<svg style="left:2470px;top:520px;will-change:transform;" width="220" height="170" viewBox="0 0 2138 1652"><polyline points="285,800 330,740 470,590 640,470 1030,285 1150,360 1250,420 1450,425 1560,520 1660,580 1645,640 1640,700 1720,800 1700,890 1420,940 1250,1000 1190,1060 1130,1100 1130,1200 1050,1190 940,1150 790,1125 780,1060 560,1050 285,950 285,800" fill="none" stroke="#7d7f84" stroke-width="7" stroke-linejoin="round" stroke-linecap="round" /><polyline points="470,590 1040,560 1250,420" fill="none" stroke="#7d7f84" stroke-width="7" stroke-linejoin="round" stroke-linecap="round" /><polyline points="640,470 850,600 1000,700 1130,1100" fill="none" stroke="#7d7f84" stroke-width="7" stroke-linejoin="round" stroke-linecap="round" /><polyline points="1040,560 960,640 1000,700" fill="none" stroke="#7d7f84" stroke-width="7" stroke-linejoin="round" stroke-linecap="round" /><polyline points="850,600 1450,425" fill="none" stroke="#7d7f84" stroke-width="7" stroke-linejoin="round" stroke-linecap="round" /><polyline points="1000,700 1640,700" fill="none" stroke="#7d7f84" stroke-width="7" stroke-linejoin="round" stroke-linecap="round" /><polyline points="780,1060 1000,880 1100,760" fill="none" stroke="#7d7f84" stroke-width="7" stroke-linejoin="round" stroke-linecap="round" /><polyline points="285,950 560,1050" fill="none" stroke="#7d7f84" stroke-width="7" stroke-linejoin="round" stroke-linecap="round" /><polyline points="330,740 600,520" fill="none" stroke="#7d7f84" stroke-width="7" stroke-linejoin="round" stroke-linecap="round" /><polyline points="350,760 610,540" fill="none" stroke="#7d7f84" stroke-width="7" stroke-linejoin="round" stroke-linecap="round" /><polyline points="640,470 750,565" fill="none" stroke="#7d7f84" stroke-width="5" stroke-linejoin="round" stroke-linecap="round" /><polyline points="685,449 795,544" fill="none" stroke="#7d7f84" stroke-width="5" stroke-linejoin="round" stroke-linecap="round" /><polyline points="730,428 840,523" fill="none" stroke="#7d7f84" stroke-width="5" stroke-linejoin="round" stroke-linecap="round" /><polyline points="775,407 885,502" fill="none" stroke="#7d7f84" stroke-width="5" stroke-linejoin="round" stroke-linecap="round" /><polyline points="820,386 930,481" fill="none" stroke="#7d7f84" stroke-width="5" stroke-linejoin="round" stroke-linecap="round" /><polyline points="865,365 975,460" fill="none" stroke="#7d7f84" stroke-width="5" stroke-linejoin="round" stroke-linecap="round" /><polyline points="910,344 1020,439" fill="none" stroke="#7d7f84" stroke-width="5" stroke-linejoin="round" stroke-linecap="round" /><polyline points="955,323 1065,418" fill="none" stroke="#7d7f84" stroke-width="5" stroke-linejoin="round" stroke-linecap="round" /><polyline points="1000,302 1110,397" fill="none" stroke="#7d7f84" stroke-width="5" stroke-linejoin="round" stroke-linecap="round" /><polyline points="1100,420 1030,530" fill="none" stroke="#7d7f84" stroke-width="5" stroke-linejoin="round" stroke-linecap="round" /><polyline points="1145,426 1075,536" fill="none" stroke="#7d7f84" stroke-width="5" stroke-linejoin="round" stroke-linecap="round" /><polyline points="1190,432 1120,542" fill="none" stroke="#7d7f84" stroke-width="5" stroke-linejoin="round" stroke-linecap="round" /><polyline points="1235,438 1165,548" fill="none" stroke="#7d7f84" stroke-width="5" stroke-linejoin="round" stroke-linecap="round" /><polyline points="1280,444 1210,554" fill="none" stroke="#7d7f84" stroke-width="5" stroke-linejoin="round" stroke-linecap="round" /><polyline points="1325,450 1255,560" fill="none" stroke="#7d7f84" stroke-width="5" stroke-linejoin="round" stroke-linecap="round" /><polyline points="1370,456 1300,566" fill="none" stroke="#7d7f84" stroke-width="5" stroke-linejoin="round" stroke-linecap="round" /><ellipse cx="760" cy="500" rx="48" ry="62" transform="rotate(-28 760 500)" fill="none" stroke="#7d7f84" stroke-width="7"/><ellipse cx="760" cy="500" rx="30" ry="42" transform="rotate(-28 760 500)" fill="none" stroke="#7d7f84" stroke-width="5"/><ellipse cx="920" cy="440" rx="48" ry="62" transform="rotate(-28 920 440)" fill="none" stroke="#7d7f84" stroke-width="7"/><ellipse cx="920" cy="440" rx="30" ry="42" transform="rotate(-28 920 440)" fill="none" stroke="#7d7f84" stroke-width="5"/><ellipse cx="1080" cy="395" rx="48" ry="62" transform="rotate(-28 1080 395)" fill="none" stroke="#7d7f84" stroke-width="7"/><ellipse cx="1080" cy="395" rx="30" ry="42" transform="rotate(-28 1080 395)" fill="none" stroke="#7d7f84" stroke-width="5"/><ellipse cx="600" cy="690" rx="62" ry="92" transform="rotate(-25 600 690)" fill="none" stroke="#7d7f84" stroke-width="7"/><ellipse cx="600" cy="690" rx="80" ry="112" transform="rotate(-25 600 690)" fill="none" stroke="#7d7f84" stroke-width="5"/><ellipse cx="600" cy="690" rx="40" ry="62" transform="rotate(-25 600 690)" fill="none" stroke="#7d7f84" stroke-width="5"/><ellipse cx="820" cy="790" rx="62" ry="92" transform="rotate(-25 820 790)" fill="none" stroke="#7d7f84" stroke-width="7"/><ellipse cx="820" cy="790" rx="80" ry="112" transform="rotate(-25 820 790)" fill="none" stroke="#7d7f84" stroke-width="5"/><ellipse cx="820" cy="790" rx="40" ry="62" transform="rotate(-25 820 790)" fill="none" stroke="#7d7f84" stroke-width="5"/><ellipse cx="1180" cy="770" rx="92" ry="112" transform="rotate(-28 1180 770)" fill="none" stroke="#7d7f84" stroke-width="9"/><ellipse cx="1180" cy="770" rx="74" ry="94" transform="rotate(-28 1180 770)" fill="none" stroke="#7d7f84" stroke-width="5"/><polyline points="1120,820 1220,690" fill="none" stroke="#7d7f84" stroke-width="4" stroke-linejoin="round" stroke-linecap="round" /><polyline points="1160,850 1250,720" fill="none" stroke="#7d7f84" stroke-width="4" stroke-linejoin="round" stroke-linecap="round" /><ellipse cx="1330" cy="690" rx="92" ry="112" transform="rotate(-28 1330 690)" fill="none" stroke="#7d7f84" stroke-width="9"/><ellipse cx="1330" cy="690" rx="74" ry="94" transform="rotate(-28 1330 690)" fill="none" stroke="#7d7f84" stroke-width="5"/><polyline points="1270,740 1370,610" fill="none" stroke="#7d7f84" stroke-width="4" stroke-linejoin="round" stroke-linecap="round" /><polyline points="1310,770 1400,640" fill="none" stroke="#7d7f84" stroke-width="4" stroke-linejoin="round" stroke-linecap="round" /><ellipse cx="1470" cy="620" rx="92" ry="112" transform="rotate(-28 1470 620)" fill="none" stroke="#7d7f84" stroke-width="9"/><ellipse cx="1470" cy="620" rx="74" ry="94" transform="rotate(-28 1470 620)" fill="none" stroke="#7d7f84" stroke-width="5"/><polyline points="1410,670 1510,540" fill="none" stroke="#7d7f84" stroke-width="4" stroke-linejoin="round" stroke-linecap="round" /><polyline points="1450,700 1540,570" fill="none" stroke="#7d7f84" stroke-width="4" stroke-linejoin="round" stroke-linecap="round" /><path d="M450 970 A70 55 0 0 1 590 970" fill="none" stroke="#7d7f84" stroke-width="8"/><path d="M475 975 A45 36 0 0 1 565 975" fill="none" stroke="#7d7f84" stroke-width="6"/><path d="M630 1010 A70 55 0 0 1 770 1010" fill="none" stroke="#7d7f84" stroke-width="8"/><path d="M655 1015 A45 36 0 0 1 745 1015" fill="none" stroke="#7d7f84" stroke-width="6"/><path d="M970 1130 A70 55 0 0 1 1110 1130" fill="none" stroke="#7d7f84" stroke-width="8"/><path d="M995 1135 A45 36 0 0 1 1085 1135" fill="none" stroke="#7d7f84" stroke-width="6"/><polyline points="960,740 1050,880 1030,900 940,760 960,740" fill="none" stroke="#7d7f84" stroke-width="5" stroke-linejoin="round" stroke-linecap="round" /><polyline points="780,900 900,800" fill="none" stroke="#55575c" stroke-width="9" stroke-linejoin="round" stroke-linecap="round" /><polyline points="790,1040 830,1080" fill="none" stroke="#55575c" stroke-width="12" stroke-linejoin="round" stroke-linecap="round" /><polyline points="1100,960 1400,860 1420,940" fill="none" stroke="#7d7f84" stroke-width="5" stroke-linejoin="round" stroke-linecap="round" /><polyline points="1250,1000 1230,900" fill="none" stroke="#7d7f84" stroke-width="5" stroke-linejoin="round" stroke-linecap="round" /><polyline points="1420,940 1600,900 1660,780 1640,700" fill="none" stroke="#7d7f84" stroke-width="5" stroke-linejoin="round" stroke-linecap="round" /><polyline points="1560,520 1600,600 1660,580" fill="none" stroke="#7d7f84" stroke-width="5" stroke-linejoin="round" stroke-linecap="round" /><polyline points="1130,1100 1130,1210" fill="none" stroke="#5f7080" stroke-width="9" stroke-linejoin="round" stroke-linecap="round" /><polyline points="1665,800 1665,930" fill="none" stroke="#5f7080" stroke-width="9" stroke-linejoin="round" stroke-linecap="round" /><polyline points="1605,800 1605,880" fill="none" stroke="#7d7f84" stroke-width="7" stroke-linejoin="round" stroke-linecap="round" /><polyline points="1725,640 1725,960" fill="none" stroke="#55575c" stroke-width="7" stroke-linejoin="round" stroke-linecap="round" /><polyline points="1740,700 1870,660" fill="none" stroke="#7d7f84" stroke-width="5" stroke-linejoin="round" stroke-linecap="round" /><polyline points="1740,705 1790,690" fill="none" stroke="#33353a" stroke-width="9" stroke-linejoin="round" stroke-linecap="round" /><polyline points="1215,1270 1215,1390" fill="none" stroke="#7d7f84" stroke-width="5" stroke-linejoin="round" stroke-linecap="round" /><polyline points="1215,1270 1165,1400" fill="none" stroke="#7d7f84" stroke-width="5" stroke-linejoin="round" stroke-linecap="round" stroke-dasharray="14 8"/><ellipse cx="600" cy="690" rx="24" ry="38" transform="rotate(-25 600 690)" fill="none" stroke="#7d7f84" stroke-width="5"/><ellipse cx="505" cy="650" rx="12" ry="16" transform="rotate(-25 505 650)" fill="none" stroke="#7d7f84" stroke-width="4"/><ellipse cx="680" cy="720" rx="12" ry="16" transform="rotate(-25 680 720)" fill="none" stroke="#7d7f84" stroke-width="4"/><ellipse cx="540" cy="790" rx="12" ry="16" transform="rotate(-25 540 790)" fill="none" stroke="#7d7f84" stroke-width="4"/><ellipse cx="650" cy="580" rx="12" ry="16" transform="rotate(-25 650 580)" fill="none" stroke="#7d7f84" stroke-width="4"/><ellipse cx="820" cy="790" rx="24" ry="38" transform="rotate(-25 820 790)" fill="none" stroke="#7d7f84" stroke-width="5"/><ellipse cx="725" cy="750" rx="12" ry="16" transform="rotate(-25 725 750)" fill="none" stroke="#7d7f84" stroke-width="4"/><ellipse cx="900" cy="820" rx="12" ry="16" transform="rotate(-25 900 820)" fill="none" stroke="#7d7f84" stroke-width="4"/><ellipse cx="760" cy="890" rx="12" ry="16" transform="rotate(-25 760 890)" fill="none" stroke="#7d7f84" stroke-width="4"/><ellipse cx="870" cy="680" rx="12" ry="16" transform="rotate(-25 870 680)" fill="none" stroke="#7d7f84" stroke-width="4"/><ellipse cx="1186" cy="778" rx="84" ry="104" transform="rotate(-28 1186 778)" fill="none" stroke="#7d7f84" stroke-width="4"/><path d="M1110 830 A 90 110 -28 0 0 1260 800" fill="none" stroke="#7d7f84" stroke-width="5"/><ellipse cx="1336" cy="698" rx="84" ry="104" transform="rotate(-28 1336 698)" fill="none" stroke="#7d7f84" stroke-width="4"/><path d="M1260 750 A 90 110 -28 0 0 1410 720" fill="none" stroke="#7d7f84" stroke-width="5"/><ellipse cx="1476" cy="628" rx="84" ry="104" transform="rotate(-28 1476 628)" fill="none" stroke="#7d7f84" stroke-width="4"/><path d="M1400 680 A 90 110 -28 0 0 1550 650" fill="none" stroke="#7d7f84" stroke-width="5"/><ellipse cx="756" cy="506" rx="58" ry="74" transform="rotate(-28 756 506)" fill="none" stroke="#7d7f84" stroke-width="4"/><ellipse cx="916" cy="446" rx="58" ry="74" transform="rotate(-28 916 446)" fill="none" stroke="#7d7f84" stroke-width="4"/><ellipse cx="1076" cy="401" rx="58" ry="74" transform="rotate(-28 1076 401)" fill="none" stroke="#7d7f84" stroke-width="4"/><polyline points="470,590 510,630" fill="none" stroke="#7d7f84" stroke-width="4" stroke-linejoin="round" stroke-linecap="round" /><polyline points="528,560 568,600" fill="none" stroke="#7d7f84" stroke-width="4" stroke-linejoin="round" stroke-linecap="round" /><polyline points="586,530 626,570" fill="none" stroke="#7d7f84" stroke-width="4" stroke-linejoin="round" stroke-linecap="round" /><polyline points="644,500 684,540" fill="none" stroke="#7d7f84" stroke-width="4" stroke-linejoin="round" stroke-linecap="round" /><polyline points="702,470 742,510" fill="none" stroke="#7d7f84" stroke-width="4" stroke-linejoin="round" stroke-linecap="round" /><polyline points="760,440 800,480" fill="none" stroke="#7d7f84" stroke-width="4" stroke-linejoin="round" stroke-linecap="round" /><polyline points="818,410 858,450" fill="none" stroke="#7d7f84" stroke-width="4" stroke-linejoin="round" stroke-linecap="round" /><polyline points="876,380 916,420" fill="none" stroke="#7d7f84" stroke-width="4" stroke-linejoin="round" stroke-linecap="round" /><polyline points="934,350 974,390" fill="none" stroke="#7d7f84" stroke-width="4" stroke-linejoin="round" stroke-linecap="round" /><polyline points="992,320 1032,360" fill="none" stroke="#7d7f84" stroke-width="4" stroke-linejoin="round" stroke-linecap="round" /><polyline points="1010,720 1036,674" fill="none" stroke="#7d7f84" stroke-width="4" stroke-linejoin="round" stroke-linecap="round" /><polyline points="1065,716 1091,670" fill="none" stroke="#7d7f84" stroke-width="4" stroke-linejoin="round" stroke-linecap="round" /><polyline points="1120,712 1146,666" fill="none" stroke="#7d7f84" stroke-width="4" stroke-linejoin="round" stroke-linecap="round" /><polyline points="1175,708 1201,662" fill="none" stroke="#7d7f84" stroke-width="4" stroke-linejoin="round" stroke-linecap="round" /><polyline points="1230,704 1256,658" fill="none" stroke="#7d7f84" stroke-width="4" stroke-linejoin="round" stroke-linecap="round" /><polyline points="1285,700 1311,654" fill="none" stroke="#7d7f84" stroke-width="4" stroke-linejoin="round" stroke-linecap="round" /><polyline points="1340,696 1366,650" fill="none" stroke="#7d7f84" stroke-width="4" stroke-linejoin="round" stroke-linecap="round" /><polyline points="1395,692 1421,646" fill="none" stroke="#7d7f84" stroke-width="4" stroke-linejoin="round" stroke-linecap="round" /><polyline points="470,590 500,620 350,780" fill="none" stroke="#7d7f84" stroke-width="5" stroke-linejoin="round" stroke-linecap="round" /><polyline points="500,620 1000,600" fill="none" stroke="#7d7f84" stroke-width="4" stroke-linejoin="round" stroke-linecap="round" /><polyline points="700,640 760,720 700,800" fill="none" stroke="#7d7f84" stroke-width="4" stroke-linejoin="round" stroke-linecap="round" /><polyline points="660,880 760,930 860,900" fill="none" stroke="#7d7f84" stroke-width="5" stroke-linejoin="round" stroke-linecap="round" /><polyline points="560,1050 590,1000 760,1040 780,1060" fill="none" stroke="#7d7f84" stroke-width="5" stroke-linejoin="round" stroke-linecap="round" /><polyline points="420,900 470,960 430,990" fill="none" stroke="#7d7f84" stroke-width="5" stroke-linejoin="round" stroke-linecap="round" /><polyline points="300,930 560,1030" fill="none" stroke="#7d7f84" stroke-width="4" stroke-linejoin="round" stroke-linecap="round" /><polyline points="320,900 520,980" fill="none" stroke="#7d7f84" stroke-width="4" stroke-linejoin="round" stroke-linecap="round" /><polyline points="880,1060 930,1120 960,1100 910,1040 880,1060" fill="none" stroke="#7d7f84" stroke-width="5" stroke-linejoin="round" stroke-linecap="round" /><polyline points="1000,700 1020,660 1100,640 1130,680" fill="none" stroke="#7d7f84" stroke-width="5" stroke-linejoin="round" stroke-linecap="round" /><polyline points="960,560 1000,600 1080,590" fill="none" stroke="#7d7f84" stroke-width="4" stroke-linejoin="round" stroke-linecap="round" /><polyline points="1160,470 1200,520 1300,500 1330,450" fill="none" stroke="#7d7f84" stroke-width="4" stroke-linejoin="round" stroke-linecap="round" /><polyline points="1300,500 1420,560" fill="none" stroke="#7d7f84" stroke-width="4" stroke-linejoin="round" stroke-linecap="round" /><polyline points="1500,760 1560,800 1600,760" fill="none" stroke="#7d7f84" stroke-width="5" stroke-linejoin="round" stroke-linecap="round" /><polyline points="1380,880 1400,820 1470,800" fill="none" stroke="#7d7f84" stroke-width="5" stroke-linejoin="round" stroke-linecap="round" /><polyline points="1250,1000 1300,930 1420,900" fill="none" stroke="#7d7f84" stroke-width="5" stroke-linejoin="round" stroke-linecap="round" /><polyline points="1190,1060 1210,980 1180,940" fill="none" stroke="#7d7f84" stroke-width="6" stroke-linejoin="round" stroke-linecap="round" /><polyline points="1560,520 1620,560 1650,540 1670,600" fill="none" stroke="#7d7f84" stroke-width="5" stroke-linejoin="round" stroke-linecap="round" /><polyline points="1230,440 1270,400 1330,420" fill="none" stroke="#7d7f84" stroke-width="5" stroke-linejoin="round" stroke-linecap="round" /><polyline points="1150,360 1180,400 1160,440" fill="none" stroke="#7d7f84" stroke-width="5" stroke-linejoin="round" stroke-linecap="round" /><polyline points="1640,700 1600,740 1610,800" fill="none" stroke="#7d7f84" stroke-width="5" stroke-linejoin="round" stroke-linecap="round" /><ellipse cx="1420" cy="905" rx="16" ry="22" transform="rotate(-20 1420 905)" fill="none" stroke="#7d7f84" stroke-width="5"/><ellipse cx="655" cy="985" rx="22" ry="14" transform="rotate(0 655 985)" fill="none" stroke="#7d7f84" stroke-width="6"/><ellipse cx="770" cy="1000" rx="26" ry="18" transform="rotate(0 770 1000)" fill="none" stroke="#55575c" stroke-width="7"/><ellipse cx="700" cy="700" rx="16" ry="22" transform="rotate(-25 700 700)" fill="none" stroke="#7d7f84" stroke-width="4"/><ellipse cx="690" cy="830" rx="14" ry="18" transform="rotate(-25 690 830)" fill="none" stroke="#7d7f84" stroke-width="4"/><ellipse cx="1040" cy="1120" rx="30" ry="24" transform="rotate(0 1040 1120)" fill="none" stroke="#7d7f84" stroke-width="5"/><polyline points="290,800 240,850 215,900 250,960 285,950" fill="none" stroke="#8fe3e0" stroke-width="6" stroke-linejoin="round" stroke-linecap="round" /><polyline points="215,900 260,920" fill="none" stroke="#8fe3e0" stroke-width="6" stroke-linejoin="round" stroke-linecap="round" /><polyline points="180,790 235,880 180,960" fill="none" stroke="#9aa0f0" stroke-width="5" stroke-linejoin="round" stroke-linecap="round" /><polyline points="1140,1100 1200,1070 1250,1160 1200,1230 1150,1180 1140,1100" fill="none" stroke="#8fe3e0" stroke-width="5" stroke-linejoin="round" stroke-linecap="round" /><polyline points="1160,1150 1240,1120" fill="none" stroke="#8fe3e0" stroke-width="5" stroke-linejoin="round" stroke-linecap="round" /><polyline points="1670,800 1730,790 1760,900 1700,960 1670,930" fill="none" stroke="#8fe3e0" stroke-width="5" stroke-linejoin="round" stroke-linecap="round" /><polyline points="1650,960 1760,920" fill="none" stroke="#8fe3e0" stroke-width="5" stroke-linejoin="round" stroke-linecap="round" /><polyline points="1090,1280 1220,1250 1260,1170" fill="none" stroke="#8c94f5" stroke-width="5" stroke-linejoin="round" stroke-linecap="round" /><polyline points="1220,1250 1290,1350" fill="none" stroke="#8c94f5" stroke-width="5" stroke-linejoin="round" stroke-linecap="round" /><polyline points="1600,1000 1730,955 1755,850" fill="none" stroke="#f58cb8" stroke-width="5" stroke-linejoin="round" stroke-linecap="round" /><polyline points="1730,955 1810,1060" fill="none" stroke="#f58cb8" stroke-width="5" stroke-linejoin="round" stroke-linecap="round" /><polyline points="1420,335 1285,445" fill="none" stroke="#f0465a" stroke-width="6" stroke-linejoin="round" stroke-linecap="round" /><polyline points="1060,1195 1175,1232" fill="none" stroke="#f0465a" stroke-width="10" stroke-linejoin="round" stroke-linecap="round" /><polyline points="1565,895 1680,935" fill="none" stroke="#f0465a" stroke-width="10" stroke-linejoin="round" stroke-linecap="round" /><polyline points="1040,575 1040,240" fill="none" stroke="#b768f2" stroke-width="17" stroke-linejoin="round" stroke-linecap="round" /><path d="M1040 175 L1080 262 L1040 245 L1000 262 Z" fill="#b768f2"/><polyline points="775,1050 470,1185" fill="none" stroke="#b768f2" stroke-width="17" stroke-linejoin="round" stroke-linecap="round" /><path d="M412 1208 L478 1140 L480 1182 L506 1212 Z" fill="#b768f2"/><polyline points="1255,1015 1650,1152" fill="none" stroke="#b768f2" stroke-width="17" stroke-linejoin="round" stroke-linecap="round" /><path d="M1712 1172 L1620 1186 L1648 1152 L1646 1108 Z" fill="#b768f2"/><text x="190" y="255" font-family="Liberation Serif, serif" font-size="62" fill="#26272b" style="" >Left</text><text x="462" y="250" font-family="Liberation Serif, serif" font-size="62" fill="#26272b" style="" >Rear</text><text x="188" y="375" font-family="Liberation Serif, serif" font-size="62" fill="#26272b" style="" >Front</text><text x="445" y="375" font-family="Liberation Serif, serif" font-size="62" fill="#26272b" style="" >Right</text><polyline points="300,262 450,322" fill="none" stroke="#33353a" stroke-width="6" stroke-linejoin="round" stroke-linecap="round" /><polyline points="310,318 450,255" fill="none" stroke="#33353a" stroke-width="6" stroke-linejoin="round" stroke-linecap="round" /><text x="1300" y="305" font-family="Liberation Serif, serif" font-size="64" fill="#26272b" style="" >Cylinder Block</text><text x="1085" y="222" font-family="Liberation Serif, serif" font-size="70" fill="#26272b" style="font-style:italic;" >z</text><text x="520" y="1250" font-family="Liberation Serif, serif" font-size="64" fill="#26272b" style="font-style:italic;" >x</text><text x="1690" y="1245" font-family="Liberation Serif, serif" font-size="80" fill="#26272b" style="font-style:italic;" >y</text><text x="1260" y="1135" font-family="Liberation Serif, serif" font-size="70" fill="#26272b" style="font-style:italic;" >k</text><text x="1300" y="1150" font-family="Liberation Serif, serif" font-size="36" fill="#26272b" style="font-style:italic;" >xf</text><text x="985" y="1300" font-family="Liberation Serif, serif" font-size="70" fill="#26272b" style="font-style:italic;" >k</text><text x="1022" y="1316" font-family="Liberation Serif, serif" font-size="36" fill="#26272b" style="font-style:italic;" >yf</text><text x="1290" y="1405" font-family="Liberation Serif, serif" font-size="70" fill="#26272b" style="font-style:italic;" >k</text><text x="1328" y="1420" font-family="Liberation Serif, serif" font-size="36" fill="#26272b" style="font-style:italic;" >zf</text><text x="1265" y="1285" font-family="Liberation Serif, serif" font-size="64" fill="#26272b" style="font-style:italic;" >(x</text><text x="1345" y="1300" font-family="Liberation Serif, serif" font-size="34" fill="#26272b" style="font-style:italic;" >f</text><text x="1368" y="1285" font-family="Liberation Serif, serif" font-size="64" fill="#26272b" style="font-style:italic;" >,y</text><text x="1440" y="1300" font-family="Liberation Serif, serif" font-size="34" fill="#26272b" style="font-style:italic;" >f</text><text x="1462" y="1285" font-family="Liberation Serif, serif" font-size="64" fill="#26272b" style="font-style:italic;" >,z</text><text x="1530" y="1300" font-family="Liberation Serif, serif" font-size="34" fill="#26272b" style="font-style:italic;" >f</text><text x="1555" y="1285" font-family="Liberation Serif, serif" font-size="64" fill="#26272b" style="" >)</text><text x="1145" y="1440" font-family="Liberation Serif, serif" font-size="70" fill="#26272b" style="font-style:italic;" >θ</text><text x="1185" y="1458" font-family="Liberation Serif, serif" font-size="36" fill="#26272b" style="font-style:italic;" >f</text><text x="930" y="1195" font-family="Liberation Serif, serif" font-size="62" fill="#f0465a" style="font-style:italic;" >M</text><text x="1000" y="1212" font-family="Liberation Serif, serif" font-size="36" fill="#f0465a" style="font-style:italic;" >f</text><text x="1465" y="900" font-family="Liberation Serif, serif" font-size="58" fill="#f0465a" style="font-style:italic;" >M</text><text x="1530" y="915" font-family="Liberation Serif, serif" font-size="34" fill="#f0465a" style="font-style:italic;" >r</text><text x="1745" y="655" font-family="Liberation Serif, serif" font-size="64" fill="#26272b" style="font-style:italic;" >θ</text><text x="1785" y="668" font-family="Liberation Serif, serif" font-size="34" fill="#26272b" style="font-style:italic;" >r</text><text x="1755" y="825" font-family="Liberation Serif, serif" font-size="66" fill="#26272b" style="font-style:italic;" >k</text><text x="1792" y="838" font-family="Liberation Serif, serif" font-size="34" fill="#26272b" style="font-style:italic;" >xr</text><text x="1515" y="1055" font-family="Liberation Serif, serif" font-size="66" fill="#26272b" style="font-style:italic;" >k</text><text x="1550" y="1070" font-family="Liberation Serif, serif" font-size="34" fill="#26272b" style="font-style:italic;" >yr</text><text x="1810" y="1140" font-family="Liberation Serif, serif" font-size="66" fill="#26272b" style="font-style:italic;" >k</text><text x="1848" y="1152" font-family="Liberation Serif, serif" font-size="34" fill="#26272b" style="font-style:italic;" >zr</text><text x="1620" y="995" font-family="Liberation Serif, serif" font-size="60" fill="#26272b" style="" >(</text><text x="1760" y="995" font-family="Liberation Serif, serif" font-size="60" fill="#6a6c70" style="font-style:italic;" >y</text><text x="1795" y="1008" font-family="Liberation Serif, serif" font-size="30" fill="#26272b" style="font-style:italic;" >r</text><text x="1815" y="995" font-family="Liberation Serif, serif" font-size="60" fill="#6a6c70" style="font-style:italic;" >,z</text><text x="1875" y="1008" font-family="Liberation Serif, serif" font-size="30" fill="#26272b" style="font-style:italic;" >r</text><text x="1898" y="995" font-family="Liberation Serif, serif" font-size="60" fill="#26272b" style="" >)</text><rect x="102.04" y="102.04" width="1904.76" height="1438.26" fill="none" stroke="#55575c" stroke-width="9.718"/></svg>
<div style="left:2077px;top:745px;width:780px;height:198.5px;border:1.5px solid #e3e5e9;border-radius:9px;background:#fff;"></div>
<svg style="left:2113.5px;top:791px;" width="14" height="10" viewBox="0 0 14 10"><path d="M2.4 2.2 L7 6.8 L11.6 2.2" fill="none" stroke="#172b4d" stroke-width="2.9" stroke-linecap="round" stroke-linejoin="round"/></svg>
<div style="left:2103px;top:850.3px;width:81px;height:50.4px;background:#f1f2f4;border-radius:5px;"></div>
<svg style="left:2757.1px;top:780px;" width="32" height="32" viewBox="0 0 32 32"><circle cx="16" cy="16" r="15.9" fill="#a9b0be"/><path d="M11.6 12.6 C11.6 9.8 13.4 8.4 16 8.4 C18.6 8.4 20.4 9.9 20.4 12.2 C20.4 15.4 16.2 15.4 16.2 18.6" fill="none" stroke="#fff" stroke-width="3" stroke-linecap="round"/><circle cx="16.2" cy="23.4" r="2" fill="#fff"/></svg>
<svg style="left:2795.7px;top:780.8px;" width="30" height="30" viewBox="0 0 30 30"><g transform="translate(15,15)"><circle r="9.6" fill="none" stroke="#a9b0be" stroke-width="3.6"/><rect x="-2.9" y="-14.1" width="5.8" height="5" rx="1.7" fill="#a9b0be" transform="rotate(22.5)"/><rect x="-2.9" y="-14.1" width="5.8" height="5" rx="1.7" fill="#a9b0be" transform="rotate(67.5)"/><rect x="-2.9" y="-14.1" width="5.8" height="5" rx="1.7" fill="#a9b0be" transform="rotate(112.5)"/><rect x="-2.9" y="-14.1" width="5.8" height="5" rx="1.7" fill="#a9b0be" transform="rotate(157.5)"/><rect x="-2.9" y="-14.1" width="5.8" height="5" rx="1.7" fill="#a9b0be" transform="rotate(202.5)"/><rect x="-2.9" y="-14.1" width="5.8" height="5" rx="1.7" fill="#a9b0be" transform="rotate(247.5)"/><rect x="-2.9" y="-14.1" width="5.8" height="5" rx="1.7" fill="#a9b0be" transform="rotate(292.5)"/><rect x="-2.9" y="-14.1" width="5.8" height="5" rx="1.7" fill="#a9b0be" transform="rotate(337.5)"/></g></svg>
<div style="left:2077px;top:970.5px;width:780px;height:240.0px;border:1.5px solid #e3e5e9;border-radius:9px;background:#fff;"></div>
<svg style="left:2113.5px;top:1009.4px;" width="14" height="10" viewBox="0 0 14 10"><path d="M2.4 2.2 L7 6.8 L11.6 2.2" fill="none" stroke="#172b4d" stroke-width="2.9" stroke-linecap="round" stroke-linejoin="round"/></svg>
<div style="left:2103px;top:1056px;width:286px;height:25.6px;background:#3d4c68;border-radius:4px;"></div>
<div style="left:2480px;top:1051px;width:125px;height:33.5px;border:1.5px solid #0c66e4;border-radius:7px;background:#f4f6fa;"></div>
<div style="left:2480px;top:1097px;width:128px;height:33.5px;border:1.5px solid #0c66e4;border-radius:7px;background:#f4f6fa;"></div>
<div style="left:2480px;top:1144px;width:81px;height:33.5px;border:1.5px solid #0c66e4;border-radius:7px;background:#f4f6fa;"></div>
<div style="left:2103px;top:1150px;width:106px;height:25px;background:#3d4c68;border-radius:4px;"></div>
<div style="left:2077px;top:1237.4px;width:780px;height:177.19999999999982px;border:1.5px solid #e3e5e9;border-radius:9px;background:#fff;"></div>
<svg style="left:2113.5px;top:1276.8px;" width="14" height="10" viewBox="0 0 14 10"><path d="M2.4 2.2 L7 6.8 L11.6 2.2" fill="none" stroke="#172b4d" stroke-width="2.9" stroke-linecap="round" stroke-linejoin="round"/></svg>
<div style="left:2103px;top:1323px;width:102px;height:25px;background:#22774f;border-radius:4px;"></div>
<div style="left:2077px;top:1440.2px;width:780px;height:288.0999999999999px;border:1.5px solid #e3e5e9;border-radius:9px;background:#fff;"></div>
<svg style="left:2113.5px;top:1488px;" width="14" height="10" viewBox="0 0 14 10"><path d="M2.4 2.2 L7 6.8 L11.6 2.2" fill="none" stroke="#172b4d" stroke-width="2.9" stroke-linecap="round" stroke-linejoin="round"/></svg>
<div style="left:2103px;top:1542.4px;width:55px;height:25.9px;background:#0c66e4;border-radius:4px;"></div>
<div style="left:2480px;top:1537px;width:229px;height:41px;border:1.5px solid #a9d3ea;border-radius:7px;background:#f4f6f9;"></div>
<div style="left:2480px;top:1594.2px;width:231px;height:41.0px;border:1.5px solid #a9d3ea;border-radius:7px;background:#f4f6f9;"></div>
<div style="left:2480px;top:1651.3px;width:231px;height:40.299999999999955px;border:1.5px solid #a9d3ea;border-radius:7px;background:#f4f6f9;"></div>
<div style="left:2077px;top:1754.2px;width:780px;height:109.0px;border:1.5px solid #e3e5e9;border-radius:9px;background:#fff;"></div>
<svg style="left:2113.5px;top:1797.6px;" width="14" height="10" viewBox="0 0 14 10"><path d="M2.4 2.2 L7 6.8 L11.6 2.2" fill="none" stroke="#172b4d" stroke-width="2.9" stroke-linecap="round" stroke-linejoin="round"/></svg>
<svg style="left:2796px;top:1784px;" width="30" height="30" viewBox="0 0 30 30"><g transform="translate(15,15)"><circle r="9.6" fill="none" stroke="#a9b0be" stroke-width="3.6"/><rect x="-2.9" y="-14.1" width="5.8" height="5" rx="1.7" fill="#a9b0be" transform="rotate(22.5)"/><rect x="-2.9" y="-14.1" width="5.8" height="5" rx="1.7" fill="#a9b0be" transform="rotate(67.5)"/><rect x="-2.9" y="-14.1" width="5.8" height="5" rx="1.7" fill="#a9b0be" transform="rotate(112.5)"/><rect x="-2.9" y="-14.1" width="5.8" height="5" rx="1.7" fill="#a9b0be" transform="rotate(157.5)"/><rect x="-2.9" y="-14.1" width="5.8" height="5" rx="1.7" fill="#a9b0be" transform="rotate(202.5)"/><rect x="-2.9" y="-14.1" width="5.8" height="5" rx="1.7" fill="#a9b0be" transform="rotate(247.5)"/><rect x="-2.9" y="-14.1" width="5.8" height="5" rx="1.7" fill="#a9b0be" transform="rotate(292.5)"/><rect x="-2.9" y="-14.1" width="5.8" height="5" rx="1.7" fill="#a9b0be" transform="rotate(337.5)"/></g></svg>
<div style="left:493px;top:1901px;width:2364px;height:88.5px;border:1.5px solid #e3e5e9;border-radius:9px;background:#fff;"></div>
<svg style="left:531.8px;top:1938.4px;" width="10" height="14" viewBox="0 0 10 14"><path d="M2.6 2.4 L7.2 7 L2.6 11.6" fill="none" stroke="#172b4d" stroke-width="2.9" stroke-linecap="round" stroke-linejoin="round"/></svg>
<div style="left:493px;top:2028px;width:2364px;height:103.5px;border:1.5px solid #e3e5e9;border-radius:9px;background:#fff;"></div>
<svg style="left:531.8px;top:2073.4px;" width="10" height="14" viewBox="0 0 10 14"><path d="M2.6 2.4 L7.2 7 L2.6 11.6" fill="none" stroke="#172b4d" stroke-width="2.9" stroke-linecap="round" stroke-linejoin="round"/></svg>
<svg style="left:2702px;top:2066px;" width="28" height="28" viewBox="0 0 28 28"><g fill="none" stroke="#172b4d" stroke-width="2.8" stroke-linecap="butt" stroke-linejoin="round"><path d="M5.2 7.6 A 11.04 11.04 0 1 1 6 21.4"/><path d="M14.2 8.2 V14.4 L18.2 18" stroke-width="2.4"/></g><path d="M1.8 2.4 V10 H9.4 Z" fill="#172b4d" stroke="#172b4d" stroke-width="1" stroke-linejoin="round"/></svg>
<div id="tx">
<span class="t" style="left:105.5px;top:14.2px;font-size:34.15px;color:#1e1f21;-webkit-text-stroke:0.32px #1e1f21;letter-spacing:0.452px;">Confluence</span>
<span class="t" style="left:331.8px;top:22.6px;font-size:21.73px;color:#42454d;-webkit-text-stroke:0.62px #42454d;letter-spacing:0.977px;">Company hub</span>
<span class="t" style="left:509.5px;top:22.6px;font-size:21.73px;color:#42454d;-webkit-text-stroke:0.62px #42454d;letter-spacing:1.354px;">Home</span>
<span class="t" style="left:603.5px;top:22.6px;font-size:21.73px;color:#42454d;-webkit-text-stroke:0.62px #42454d;letter-spacing:0.734px;">Recent</span>
<span class="t" style="left:738.7px;top:22.6px;font-size:21.73px;color:#42454d;-webkit-text-stroke:0.62px #42454d;letter-spacing:0.669px;">Spaces</span>
<span class="t" style="left:876.5px;top:22.6px;font-size:21.73px;color:#42454d;-webkit-text-stroke:0.62px #42454d;letter-spacing:1.008px;">Teams</span>
<span class="t" style="left:1005.9px;top:22.6px;font-size:21.73px;color:#42454d;-webkit-text-stroke:0.62px #42454d;letter-spacing:1.328px;">Apps</span>
<span class="t" style="left:1121.5px;top:22.6px;font-size:21.73px;color:#42454d;-webkit-text-stroke:0.62px #42454d;letter-spacing:1.100px;">Templates</span>
<span class="t" style="left:1332.5px;top:22.6px;font-size:21.73px;color:#ffffff;-webkit-text-stroke:0.62px #ffffff;letter-spacing:0.939px;">Create</span>
<span class="t" style="left:2361.8px;top:23.3px;font-size:21.73px;color:#5f6570;-webkit-text-stroke:0.3px #5f6570;letter-spacing:0.354px;">Search</span>
<span class="t" style="left:130.6px;top:171.4px;font-size:21.73px;color:#0052cc;-webkit-text-stroke:0.32px #0052cc;letter-spacing:0.251px;">Driller Space Battery</span>
<span class="t" style="left:163.2px;top:215.8px;font-size:21.73px;color:#44546f;-webkit-text-stroke:0.32px #44546f;letter-spacing:-0.229px;">Page A</span>
<span class="t" style="left:164.1px;top:255.4px;font-size:21.73px;color:#44546f;-webkit-text-stroke:0.32px #44546f;letter-spacing:-0.598px;">[HOMEPAGE] SOS</span>
<span class="t" style="left:164.1px;top:280.4px;font-size:21.73px;color:#44546f;-webkit-text-stroke:0.32px #44546f;letter-spacing:0.352px;">Customer support</span>
<span class="t" style="left:196.0px;top:315.9px;font-size:21.73px;color:#0052cc;-webkit-text-stroke:0.32px #0052cc;letter-spacing:0.107px;">Requirements for</span>
<span class="t" style="left:196.0px;top:340.6px;font-size:21.73px;color:#0052cc;-webkit-text-stroke:0.32px #0052cc;letter-spacing:0.188px;">Autonomous car</span>
<span class="t" style="left:236.3px;top:378.8px;font-size:21.73px;color:#44546f;-webkit-text-stroke:0.32px #44546f;letter-spacing:-0.466px;">BR-01</span>
<span class="t" style="left:236.3px;top:423.5px;font-size:21.73px;color:#44546f;-webkit-text-stroke:0.32px #44546f;letter-spacing:0.234px;">BR-02</span>
<span class="t" style="left:236.3px;top:468.3px;font-size:21.73px;color:#44546f;-webkit-text-stroke:0.32px #44546f;letter-spacing:0.234px;">BR-03</span>
<span class="t" style="left:236.3px;top:513.0px;font-size:21.73px;color:#44546f;-webkit-text-stroke:0.32px #44546f;letter-spacing:0.234px;">BR-04</span>
<span class="t" style="left:236.3px;top:557.8px;font-size:21.73px;color:#44546f;-webkit-text-stroke:0.32px #44546f;letter-spacing:0.234px;">BR-05</span>
<span class="t" style="left:236.3px;top:602.5px;font-size:21.73px;color:#0052cc;-webkit-text-stroke:0.32px #0052cc;letter-spacing:-0.161px;">FN-01</span>
<span class="t" style="left:236.3px;top:647.3px;font-size:21.73px;color:#44546f;-webkit-text-stroke:0.32px #44546f;letter-spacing:0.539px;">FN-02</span>
<span class="t" style="left:236.3px;top:692.0px;font-size:21.73px;color:#44546f;-webkit-text-stroke:0.32px #44546f;letter-spacing:0.539px;">FN-03</span>
<span class="t" style="left:236.3px;top:736.8px;font-size:21.73px;color:#44546f;-webkit-text-stroke:0.32px #44546f;letter-spacing:0.539px;">FN-04</span>
<span class="t" style="left:236.3px;top:781.5px;font-size:21.73px;color:#44546f;-webkit-text-stroke:0.32px #44546f;letter-spacing:0.539px;">FN-05</span>
<span class="t" style="left:236.3px;top:826.3px;font-size:21.73px;color:#44546f;-webkit-text-stroke:0.32px #44546f;letter-spacing:0.539px;">FN-06</span>
<span class="t" style="left:236.3px;top:871.0px;font-size:21.73px;color:#44546f;-webkit-text-stroke:0.32px #44546f;letter-spacing:0.539px;">FN-07</span>
<span class="t" style="left:236.3px;top:915.8px;font-size:21.73px;color:#44546f;-webkit-text-stroke:0.32px #44546f;letter-spacing:0.539px;">FN-08</span>
<span class="t" style="left:236.3px;top:960.5px;font-size:21.73px;color:#44546f;-webkit-text-stroke:0.32px #44546f;letter-spacing:0.539px;">FN-09</span>
<span class="t" style="left:236.3px;top:1005.3px;font-size:21.73px;color:#44546f;-webkit-text-stroke:0.32px #44546f;letter-spacing:-0.336px;">FN-10</span>
<span class="t" style="left:236.3px;top:1050.0px;font-size:21.73px;color:#44546f;-webkit-text-stroke:0.32px #44546f;letter-spacing:-0.759px;">FN-11</span>
<span class="t" style="left:236.3px;top:1094.8px;font-size:21.73px;color:#44546f;-webkit-text-stroke:0.32px #44546f;letter-spacing:-0.336px;">FN-12</span>
<span class="t" style="left:236.3px;top:1139.5px;font-size:21.73px;color:#44546f;-webkit-text-stroke:0.32px #44546f;letter-spacing:0.044px;">TECH-001</span>
<span class="t" style="left:236.3px;top:1184.3px;font-size:21.73px;color:#44546f;-webkit-text-stroke:0.32px #44546f;letter-spacing:0.444px;">TECH-002</span>
<span class="t" style="left:236.3px;top:1229.0px;font-size:21.73px;color:#44546f;-webkit-text-stroke:0.32px #44546f;letter-spacing:0.444px;">TECH-003</span>
<span class="t" style="left:236.3px;top:1273.8px;font-size:21.73px;color:#44546f;-webkit-text-stroke:0.32px #44546f;letter-spacing:0.444px;">TECH-004</span>
<span class="t" style="left:236.3px;top:1318.5px;font-size:21.73px;color:#44546f;-webkit-text-stroke:0.32px #44546f;letter-spacing:0.444px;">TECH-005</span>
<span class="t" style="left:236.3px;top:1363.3px;font-size:21.73px;color:#44546f;-webkit-text-stroke:0.32px #44546f;letter-spacing:0.444px;">TECH-006</span>
<span class="t" style="left:236.3px;top:1408.0px;font-size:21.73px;color:#44546f;-webkit-text-stroke:0.32px #44546f;letter-spacing:0.158px;">TECH-007</span>
<span class="t" style="left:236.3px;top:1452.8px;font-size:21.73px;color:#44546f;-webkit-text-stroke:0.32px #44546f;letter-spacing:0.444px;">TECH-008</span>
<span class="t" style="left:195.5px;top:1494.2px;font-size:21.73px;color:#44546f;-webkit-text-stroke:0.32px #44546f;letter-spacing:0.065px;">This is a new page</span>
<span class="t" style="left:195.5px;top:1519.0px;font-size:21.73px;color:#44546f;-webkit-text-stroke:0.32px #44546f;letter-spacing:0.355px;">template</span>
<span class="t" style="left:195.5px;top:1559.5px;font-size:21.73px;color:#44546f;-webkit-text-stroke:0.32px #44546f;letter-spacing:0.361px;">ES-3867</span>
<span class="t" style="left:195.5px;top:1603.7px;font-size:21.73px;color:#44546f;-webkit-text-stroke:0.32px #44546f;letter-spacing:-1.264px;">INFRA</span>
<span class="t" style="left:195.5px;top:1643.2px;font-size:21.73px;color:#44546f;-webkit-text-stroke:0.32px #44546f;letter-spacing:0.310px;">Testing heading</span>
<span class="t" style="left:195.5px;top:1668.0px;font-size:21.73px;color:#44546f;-webkit-text-stroke:0.32px #44546f;letter-spacing:0.012px;">links</span>
<span class="t" style="left:195.5px;top:1703.2px;font-size:21.73px;color:#44546f;-webkit-text-stroke:0.32px #44546f;letter-spacing:0.014px;">V1 - Requirements</span>
<span class="t" style="left:195.5px;top:1728.0px;font-size:21.73px;color:#44546f;-webkit-text-stroke:0.32px #44546f;letter-spacing:0.339px;">for Autonomous car</span>
<span class="t" style="left:195.5px;top:1762.2px;font-size:21.73px;color:#44546f;-webkit-text-stroke:0.32px #44546f;letter-spacing:-0.141px;">SOS Customer</span>
<span class="t" style="left:195.5px;top:1787.0px;font-size:21.73px;color:#44546f;-webkit-text-stroke:0.32px #44546f;letter-spacing:0.427px;">support root page</span>
<span class="t" style="left:163.4px;top:1822.2px;font-size:21.73px;color:#44546f;-webkit-text-stroke:0.32px #44546f;letter-spacing:0.366px;">Get the most out of</span>
<span class="t" style="left:163.4px;top:1847.0px;font-size:21.73px;color:#44546f;-webkit-text-stroke:0.32px #44546f;letter-spacing:0.167px;">your team space</span>
<span class="t" style="left:163.4px;top:1881.2px;font-size:21.73px;color:#44546f;-webkit-text-stroke:0.32px #44546f;letter-spacing:0.225px;">Template - Risk</span>
<span class="t" style="left:163.4px;top:1906.0px;font-size:21.73px;color:#44546f;-webkit-text-stroke:0.32px #44546f;letter-spacing:0.079px;">assessment</span>
<span class="t" style="left:163.4px;top:1941.2px;font-size:21.73px;color:#44546f;-webkit-text-stroke:0.32px #44546f;letter-spacing:0.343px;">Template - Decision</span>
<span class="t" style="left:163.4px;top:1966.0px;font-size:21.73px;color:#44546f;-webkit-text-stroke:0.32px #44546f;letter-spacing:0.476px;">documentation</span>
<span class="t" style="left:506.8px;top:144.8px;font-size:21.73px;color:#172b4d;-webkit-text-stroke:0.32px #172b4d;letter-spacing:0.780px;">Current</span>
<span class="t" style="left:840.6px;top:144.8px;font-size:21.73px;color:#0052cc;-webkit-text-stroke:0.32px #0052cc;letter-spacing:0.727px;">Requirements for Autonomous car</span>
<span class="t" style="left:1266.3px;top:144.8px;font-size:21.73px;color:#0c55c4;-webkit-text-stroke:0.32px #0c55c4;letter-spacing:0.464px;">FN-01</span>
<span class="t" style="left:492.4px;top:212.7px;font-size:44.2px;color:#172b4d;-webkit-text-stroke:1.45px #172b4d;letter-spacing:-0.614px;">Requirement FN-01</span>
<span class="t" style="left:568.3px;top:307.1px;font-size:25.36px;color:#172b4d;-webkit-text-stroke:0.95px #172b4d;letter-spacing:0.614px;">Description</span>
<span class="t" style="left:519.5px;top:355.3px;font-size:22.36px;color:#172b4d;font-weight:700;letter-spacing:0.233px;">Autonomous Navigation:</span>
<span class="t" style="left:797.0px;top:354.8px;font-size:21.73px;color:#172b4d;-webkit-text-stroke:0.32px #172b4d;letter-spacing:0.699px;">The car must be capable of fully autonomous navigation in urban, suburban, and rural environments, including</span>
<span class="t" style="left:519.5px;top:386.7px;font-size:21.73px;color:#172b4d;-webkit-text-stroke:0.32px #172b4d;letter-spacing:0.742px;">highways, city streets, and country roads.</span>
<span class="t" style="left:2152.0px;top:307.1px;font-size:25.36px;color:#172b4d;-webkit-text-stroke:0.95px #172b4d;letter-spacing:0.478px;">Properties</span>
<span class="t" style="left:2281.3px;top:307.1px;font-size:25.36px;color:#44546f;-webkit-text-stroke:0.8px #44546f;letter-spacing:0.200px;">(4)</span>
<span class="t" style="left:2103.9px;top:362.6px;font-size:22.36px;color:#172b4d;font-weight:700;letter-spacing:-0.230px;">Refines</span>
<span class="t" style="left:2103.9px;top:421.4px;font-size:22.36px;color:#172b4d;font-weight:700;letter-spacing:0.481px;">Cost ($)</span>
<span class="t" style="left:2103.9px;top:479.6px;font-size:22.36px;color:#172b4d;font-weight:700;letter-spacing:-0.054px;">Priority</span>
<span class="t" style="left:2103.9px;top:537.9px;font-size:22.36px;color:#172b4d;font-weight:700;letter-spacing:0.056px;">Schematics</span>
<span class="t" style="left:2512.0px;top:361.4px;font-size:21.73px;color:#0052cc;-webkit-text-stroke:0.32px #0052cc;letter-spacing:0.259px;">BR-01</span>
<span class="t" style="left:2480.0px;top:420.0px;font-size:21.73px;color:#172b4d;-webkit-text-stroke:0.32px #172b4d;letter-spacing:1.291px;">2870</span>
<span class="t" style="left:2489.4px;top:482.2px;font-size:17.57px;color:#ffffff;font-weight:700;letter-spacing:-0.184px;">LOW</span>
<span class="t" style="left:2152.0px;top:783.0px;font-size:25.36px;color:#172b4d;-webkit-text-stroke:0.95px #172b4d;letter-spacing:0.509px;">External properties</span>
<span class="t" style="left:2123.2px;top:865.0px;font-size:21.73px;color:#172b4d;-webkit-text-stroke:0.7px #172b4d;letter-spacing:0.922px;">Add</span>
<span class="t" style="left:2152.0px;top:1001.6px;font-size:25.36px;color:#172b4d;-webkit-text-stroke:0.95px #172b4d;letter-spacing:0.387px;">Dependencies</span>
<span class="t" style="left:2327.1px;top:1001.6px;font-size:25.36px;color:#44546f;-webkit-text-stroke:0.8px #44546f;letter-spacing:0.400px;">(3)</span>
<span class="t" style="left:2110.3px;top:1061.2px;font-size:17.57px;color:#ffffff;font-weight:700;letter-spacing:0.334px;">FUNCTIONAL REQUIREMENT &gt;</span>
<span class="t" style="left:2489.4px;top:1057.9px;font-size:21.73px;color:#0c55c4;-webkit-text-stroke:0.32px #0c55c4;letter-spacing:0.544px;">TECH-001</span>
<span class="t" style="left:2489.4px;top:1103.9px;font-size:21.73px;color:#0c55c4;-webkit-text-stroke:0.32px #0c55c4;letter-spacing:0.972px;">TECH-002</span>
<span class="t" style="left:2489.4px;top:1150.9px;font-size:21.73px;color:#0c55c4;-webkit-text-stroke:0.32px #0c55c4;letter-spacing:0.234px;">BR-01</span>
<span class="t" style="left:2110.3px;top:1153.9px;font-size:17.57px;color:#ffffff;font-weight:700;letter-spacing:0.092px;">&lt; REFINES</span>
<span class="t" style="left:2152.0px;top:1269.0px;font-size:25.36px;color:#172b4d;-webkit-text-stroke:0.95px #172b4d;letter-spacing:-0.013px;">Page links</span>
<span class="t" style="left:2277.6px;top:1269.0px;font-size:25.36px;color:#44546f;-webkit-text-stroke:0.8px #44546f;letter-spacing:-1.700px;">(1)</span>
<span class="t" style="left:2110.3px;top:1327.9px;font-size:17.57px;color:#ffffff;font-weight:700;letter-spacing:0.120px;">ORIGINAL</span>
<span class="t" style="left:2487.5px;top:1324.1px;font-size:21.73px;color:#0052cc;-webkit-text-stroke:0.32px #0052cc;letter-spacing:0.751px;">Requirements for Autonomous</span>
<span class="t" style="left:2480.0px;top:1356.1px;font-size:21.73px;color:#0052cc;-webkit-text-stroke:0.32px #0052cc;letter-spacing:0.814px;">car</span>
<span class="t" style="left:2152.0px;top:1480.2px;font-size:25.36px;color:#172b4d;-webkit-text-stroke:0.95px #172b4d;letter-spacing:0.108px;">Jira</span>
<span class="t" style="left:2202.3px;top:1480.2px;font-size:25.36px;color:#44546f;-webkit-text-stroke:0.8px #44546f;letter-spacing:0.350px;">(3)</span>
<span class="t" style="left:2680.5px;top:1481.8px;font-size:21.73px;color:#172b4d;-webkit-text-stroke:0.7px #172b4d;letter-spacing:0.778px;">Create issue</span>
<span class="t" style="left:2110.3px;top:1547.4px;font-size:17.57px;color:#ffffff;font-weight:700;letter-spacing:0.161px;">JIRA</span>
<span class="t" style="left:2489.4px;top:1546.9px;font-size:21.73px;color:#0052cc;-webkit-text-stroke:0.32px #0052cc;letter-spacing:0.214px;">TASK-97</span>
<span class="t" style="left:2587.0px;top:1546.9px;font-size:21.73px;color:#172b4d;-webkit-text-stroke:0.32px #172b4d;">-</span>
<span class="t" style="left:2606.0px;top:1546.9px;font-size:21.73px;color:#172b4d;-webkit-text-stroke:0.32px #172b4d;letter-spacing:0.800px;">(impacts)</span>
<span class="t" style="left:2489.4px;top:1604.1px;font-size:21.73px;color:#0052cc;-webkit-text-stroke:0.32px #0052cc;letter-spacing:0.597px;">TASK-96</span>
<span class="t" style="left:2589.0px;top:1604.1px;font-size:21.73px;color:#172b4d;-webkit-text-stroke:0.32px #172b4d;">-</span>
<span class="t" style="left:2607.9px;top:1604.1px;font-size:21.73px;color:#172b4d;-webkit-text-stroke:0.32px #172b4d;letter-spacing:0.800px;">(impacts)</span>
<span class="t" style="left:2489.4px;top:1660.8px;font-size:21.73px;color:#0052cc;-webkit-text-stroke:0.32px #0052cc;letter-spacing:0.597px;">TASK-99</span>
<span class="t" style="left:2589.0px;top:1660.8px;font-size:21.73px;color:#172b4d;-webkit-text-stroke:0.32px #172b4d;">-</span>
<span class="t" style="left:2607.9px;top:1660.8px;font-size:21.73px;color:#172b4d;-webkit-text-stroke:0.32px #172b4d;letter-spacing:0.800px;">(impacts)</span>
<span class="t" style="left:2152.0px;top:1789.8px;font-size:25.36px;color:#172b4d;-webkit-text-stroke:0.95px #172b4d;letter-spacing:0.454px;">Requirement types</span>
<span class="t" style="left:2380.9px;top:1789.8px;font-size:25.36px;color:#44546f;-webkit-text-stroke:0.8px #44546f;letter-spacing:0.350px;">(0)</span>
<span class="t" style="left:567.8px;top:1933.0px;font-size:25.36px;color:#172b4d;-webkit-text-stroke:0.95px #172b4d;letter-spacing:0.519px;">Dependency graph</span>
<span class="t" style="left:567.8px;top:2068.0px;font-size:25.36px;color:#172b4d;-webkit-text-stroke:0.95px #172b4d;letter-spacing:0.782px;">History</span>
<span class="t" style="left:2735.4px;top:2069.4px;font-size:21.73px;color:#172b4d;-webkit-text-stroke:0.7px #172b4d;letter-spacing:1.337px;">History</span>
</div>
</body></html>
